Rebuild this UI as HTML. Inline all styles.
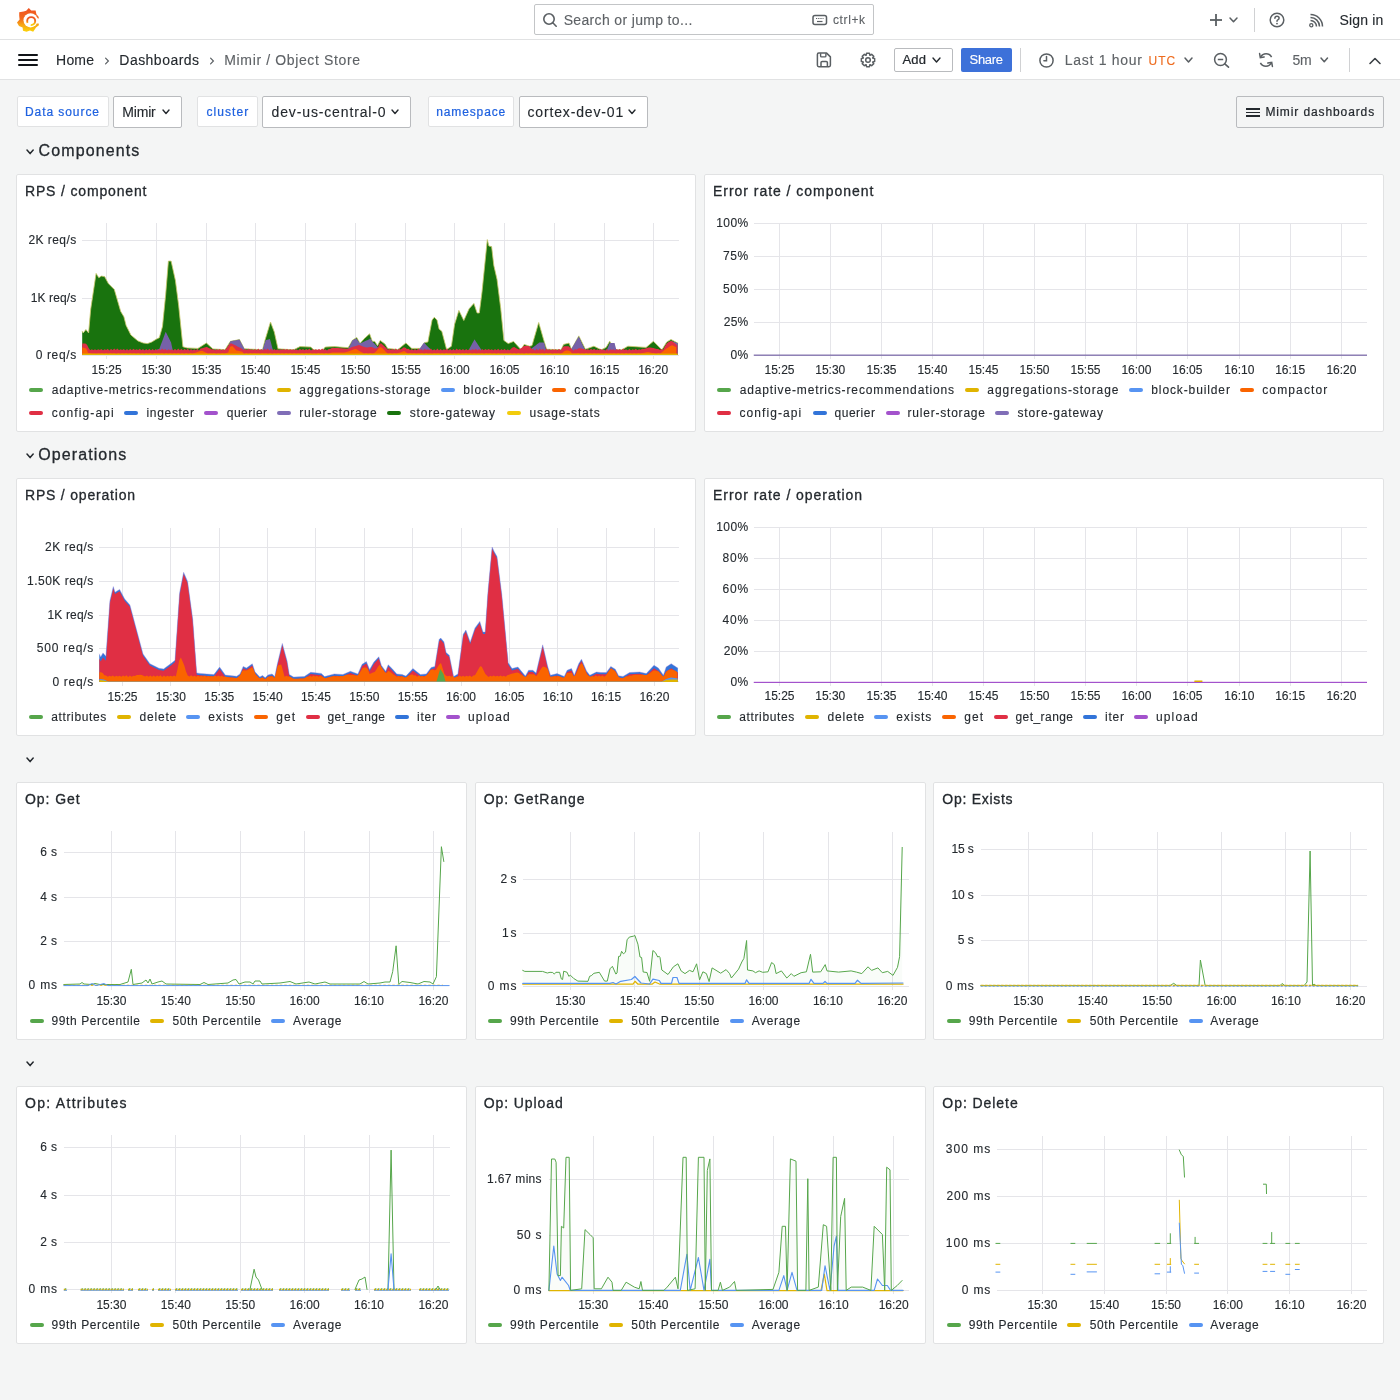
<!DOCTYPE html>
<html><head><meta charset="utf-8"><title>Mimir / Object Store - Dashboards - Grafana</title>
<style>
html,body{margin:0;padding:0;background:#f4f5f5;width:1400px;height:1400px;overflow:hidden;}
body{position:relative;font-family:"Liberation Sans",sans-serif;color:#24292e;}
.t{position:absolute;white-space:nowrap;-webkit-text-stroke:0.12px currentColor;}
#w{position:absolute;left:0;top:0;width:1400px;height:1400px;will-change:transform;}
</style></head><body><div id="w">
<div style="position:absolute;left:0px;top:0px;width:1400px;height:39px;background:#fff"></div>
<div style="position:absolute;left:0px;top:39px;width:1400px;height:1px;background:#e1e2e3"></div>
<div style="position:absolute;left:0px;top:40px;width:1400px;height:39px;background:#fff"></div>
<div style="position:absolute;left:0px;top:79px;width:1400px;height:1px;background:#e1e2e3"></div>
<svg style="position:absolute;left:14px;top:6px;" width="28" height="28" viewBox="0 0 28 28"><defs><linearGradient id="lg" x1="0" y1="0" x2="0" y2="1"><stop offset="0" stop-color="#ef5223"/><stop offset="0.45" stop-color="#f26b1d"/><stop offset="0.7" stop-color="#f7a415"/><stop offset="1" stop-color="#fbd40a"/></linearGradient></defs>
<path fill="url(#lg)" d="M14.8,2 L17.2,4.6 L21.6,4.4 L22.4,8.2 L24.4,10.5 L25.2,13 L24.6,16.5 L24.9,19.3 L22,21.5 L19.2,25.8 L16,24.4 L12.5,25.8 L9,24.8 L8.6,21.5 L5,20 L3,16.5 L5.6,13.5 L5.2,10 L5.2,6.2 L9.6,5.6 L12.2,4.8 Z"/>
<circle cx="16.6" cy="14.3" r="7.1" fill="#fff"/>
<path d="M22.6,12.2 L26,12.4 L26,17.4 L23,17.4 Z" fill="#fff"/>
<circle cx="17.2" cy="15.1" r="4.0" fill="none" stroke="url(#lg)" stroke-width="1.9" stroke-dasharray="6.63 3.84 14.66 0"/>
</svg>
<div style="position:absolute;left:534px;top:4px;width:340px;height:31px;box-sizing:border-box;border:1px solid #c3c5c7;border-radius:2px;background:#fff"></div>
<svg style="position:absolute;left:542px;top:12px;" width="16" height="16" viewBox="0 0 16 16"><circle cx="7" cy="7" r="5.2" fill="none" stroke="#5a5f63" stroke-width="1.6"/><line x1="10.8" y1="10.8" x2="14.2" y2="14.2" stroke="#5a5f63" stroke-width="1.6" stroke-linecap="round"/></svg>
<div class="t" style="left:563.70px;top:13px;font-size:14px;line-height:14px;color:#5e6266;letter-spacing:0.341px;">Search or jump to...</div>
<svg style="position:absolute;left:812px;top:14px;" width="16" height="12" viewBox="0 0 16 12"><rect x="1" y="1.5" width="13.5" height="9" rx="2" fill="none" stroke="#5a5f63" stroke-width="1.5"/><line x1="4" y1="4.5" x2="11.5" y2="4.5" stroke="#5a5f63" stroke-width="1" stroke-dasharray="1.2 1"/><line x1="5" y1="7.5" x2="10.5" y2="7.5" stroke="#5a5f63" stroke-width="1.2"/></svg>
<div class="t" style="left:832.90px;top:14px;font-size:12px;line-height:12px;color:#5e6266;letter-spacing:0.637px;">ctrl+k</div>
<svg style="position:absolute;left:1208px;top:12px;" width="16" height="16" viewBox="0 0 16 16"><line x1="8" y1="2" x2="8" y2="14" stroke="#5a5f63" stroke-width="1.8"/><line x1="2" y1="8" x2="14" y2="8" stroke="#5a5f63" stroke-width="1.8"/></svg>
<svg style="position:absolute;left:1227.5px;top:16.1px;" width="11" height="7.8" viewBox="0 0 11 7.8"><polyline points="2,2 5.5,5.8 9,2" fill="none" stroke="#5a5f63" stroke-width="1.5" stroke-linecap="round" stroke-linejoin="round"/></svg>
<div style="position:absolute;left:1254px;top:8px;width:1px;height:24px;background:#d0d1d3"></div>
<svg style="position:absolute;left:1268px;top:11px;" width="18" height="18" viewBox="0 0 18 18"><circle cx="9" cy="9" r="6.8" fill="none" stroke="#5a5f63" stroke-width="1.5"/><path d="M6.9 7.3 Q7 5.3 9 5.3 Q11.1 5.3 11.1 7.1 Q11.1 8.3 9.8 8.9 Q9 9.3 9 10.3" fill="none" stroke="#5a5f63" stroke-width="1.5" stroke-linecap="round"/><circle cx="9" cy="12.6" r="0.9" fill="#5a5f63"/></svg>
<svg style="position:absolute;left:1308px;top:13px;" width="16" height="16" viewBox="0 0 16 16"><circle cx="3.3" cy="12.2" r="1.6" fill="none" stroke="#5a5f63" stroke-width="1.3"/><path d="M2.5 7.5 A6 6 0 0 1 8.5 13.5" fill="none" stroke="#5a5f63" stroke-width="1.5"/><path d="M2.5 4.5 A9 9 0 0 1 11.5 13.5" fill="none" stroke="#5a5f63" stroke-width="1.5"/><path d="M2.5 1.5 A12 12 0 0 1 14.5 13.5" fill="none" stroke="#5a5f63" stroke-width="1.5"/></svg>
<div class="t" style="left:1339.60px;top:13px;font-size:14px;line-height:14px;letter-spacing:0.134px;">Sign in</div>
<div style="position:absolute;left:18px;top:54px;width:20px;height:2.2px;background:#111418;border-radius:1px"></div>
<div style="position:absolute;left:18px;top:59px;width:20px;height:2.2px;background:#111418;border-radius:1px"></div>
<div style="position:absolute;left:18px;top:64px;width:20px;height:2.2px;background:#111418;border-radius:1px"></div>
<div class="t" style="left:56.10px;top:53px;font-size:14px;line-height:14px;letter-spacing:0.191px;">Home</div>
<svg style="position:absolute;left:103px;top:56px;" width="8" height="10" viewBox="0 0 8 10"><polyline points="2.6,2.2 5.4,5 2.6,7.8" fill="none" stroke="#5a5f63" stroke-width="1.2" stroke-linecap="round"/></svg>
<div class="t" style="left:119.30px;top:53px;font-size:14px;line-height:14px;letter-spacing:0.472px;">Dashboards</div>
<svg style="position:absolute;left:208px;top:56px;" width="8" height="10" viewBox="0 0 8 10"><polyline points="2.6,2.2 5.4,5 2.6,7.8" fill="none" stroke="#5a5f63" stroke-width="1.2" stroke-linecap="round"/></svg>
<div class="t" style="left:224.30px;top:53px;font-size:14px;line-height:14px;color:#5e6266;letter-spacing:0.634px;">Mimir / Object Store</div>
<svg style="position:absolute;left:815px;top:51px;" width="18" height="18" viewBox="0 0 18 18"><path d="M3.8,2.1 H11.6 L15.4,5.9 V14.3 Q15.4,15.7 14,15.7 H3.8 Q2.4,15.7 2.4,14.3 V3.5 Q2.4,2.1 3.8,2.1 Z" fill="none" stroke="#5a5f63" stroke-width="1.5" stroke-linejoin="round"/><path d="M5.6,2.2 V4.9 Q5.6,5.9 6.6,5.9 H9.9 Q10.9,5.9 10.9,4.9 V2.2" fill="none" stroke="#5a5f63" stroke-width="1.4"/><path d="M6,15.6 V11.6 Q6,10.4 7.2,10.4 H11.2 Q12.4,10.4 12.4,11.6 V15.6" fill="none" stroke="#5a5f63" stroke-width="1.5"/></svg>
<svg style="position:absolute;left:859px;top:51px;" width="18" height="18" viewBox="0 0 18 18"><g transform="translate(9,9)"><path d="M6.64,-1.48 L6.64,1.48 L4.74,1.89 L4.69,2.01 L5.74,3.64 L3.64,5.74 L2.01,4.69 L1.89,4.74 L1.48,6.64 L-1.48,6.64 L-1.89,4.74 L-2.01,4.69 L-3.64,5.74 L-5.74,3.64 L-4.69,2.01 L-4.74,1.89 L-6.64,1.48 L-6.64,-1.48 L-4.74,-1.89 L-4.69,-2.01 L-5.74,-3.64 L-3.64,-5.74 L-2.01,-4.69 L-1.89,-4.74 L-1.48,-6.64 L1.48,-6.64 L1.89,-4.74 L2.01,-4.69 L3.64,-5.74 L5.74,-3.64 L4.69,-2.01 L4.74,-1.89 Z" fill="none" stroke="#5a5f63" stroke-width="1.5" stroke-linejoin="round"/><circle r="2.3" fill="none" stroke="#5a5f63" stroke-width="1.5"/></g></svg>
<div style="position:absolute;left:894px;top:48px;width:59px;height:24px;box-sizing:border-box;border:1px solid #b9bbbe;border-radius:2px;background:#fff"></div>
<div class="t" style="left:902.40px;top:53px;font-size:13px;line-height:13px;letter-spacing:0.280px;-webkit-text-stroke:0.22px currentColor;">Add</div>
<svg style="position:absolute;left:930.5px;top:55.7px;" width="11" height="8" viewBox="0 0 11 8"><polyline points="2,2 5.5,6 9,2" fill="none" stroke="#24292e" stroke-width="1.4" stroke-linecap="round" stroke-linejoin="round"/></svg>
<div style="position:absolute;left:961px;top:48px;width:51px;height:24px;background:#3d71d9;border-radius:2px"></div>
<div class="t" style="left:969.60px;top:53px;font-size:13px;line-height:13px;color:#ffffff;letter-spacing:-0.326px;">Share</div>
<div style="position:absolute;left:1020px;top:48px;width:1px;height:24px;background:#d0d1d3"></div>
<svg style="position:absolute;left:1038px;top:52px;" width="17" height="17" viewBox="0 0 17 17"><circle cx="8.5" cy="8.5" r="6.6" fill="none" stroke="#5a5f63" stroke-width="1.5"/><polyline points="8.5,4.6 8.5,8.8 5.9,8.8" fill="none" stroke="#5a5f63" stroke-width="1.5" stroke-linecap="round"/></svg>
<div class="t" style="left:1064.70px;top:53px;font-size:14px;line-height:14px;color:#5e6266;letter-spacing:0.718px;">Last 1 hour</div>
<div class="t" style="left:1148.40px;top:55px;font-size:12px;line-height:12px;color:#ee6b1e;letter-spacing:1.114px;">UTC</div>
<svg style="position:absolute;left:1182.5px;top:55.8px;" width="11" height="8" viewBox="0 0 11 8"><polyline points="2,2 5.5,6 9,2" fill="none" stroke="#5a5f63" stroke-width="1.5" stroke-linecap="round" stroke-linejoin="round"/></svg>
<svg style="position:absolute;left:1213px;top:52px;" width="18" height="18" viewBox="0 0 18 18"><circle cx="7.5" cy="7.5" r="5.9" fill="none" stroke="#5a5f63" stroke-width="1.5"/><line x1="4.8" y1="7.5" x2="10.2" y2="7.5" stroke="#5a5f63" stroke-width="1.5"/><line x1="11.8" y1="11.8" x2="15.5" y2="15.2" stroke="#5a5f63" stroke-width="1.6" stroke-linecap="round"/></svg>
<svg style="position:absolute;left:1257px;top:51px;" width="18" height="18" viewBox="0 0 18 18"><path d="M3.6 6.2 A6.2 6.2 0 0 1 14.6 6.2" fill="none" stroke="#5a5f63" stroke-width="1.5"/><path d="M14.4 11.8 A6.2 6.2 0 0 1 3.4 11.8" fill="none" stroke="#5a5f63" stroke-width="1.5"/><polyline points="2.6,2.6 3.3,6.6 7.2,5.9" fill="none" stroke="#5a5f63" stroke-width="1.5" stroke-linecap="round"/><polyline points="15.4,15.4 14.7,11.4 10.8,12.1" fill="none" stroke="#5a5f63" stroke-width="1.5" stroke-linecap="round"/></svg>
<div class="t" style="left:1292.60px;top:53px;font-size:14px;line-height:14px;color:#5e6266;letter-spacing:-0.337px;">5m</div>
<svg style="position:absolute;left:1319.05px;top:56.2px;" width="10.5" height="7.8" viewBox="0 0 10.5 7.8"><polyline points="2,2 5.25,5.8 8.5,2" fill="none" stroke="#5a5f63" stroke-width="1.5" stroke-linecap="round" stroke-linejoin="round"/></svg>
<div style="position:absolute;left:1349px;top:48px;width:1px;height:24px;background:#d0d1d3"></div>
<svg style="position:absolute;left:1368px;top:56px;" width="14" height="10" viewBox="0 0 14 10"><polyline points="2,7.5 7,2.5 12,7.5" fill="none" stroke="#3b4045" stroke-width="1.6" stroke-linecap="round" stroke-linejoin="round"/></svg>
<div style="position:absolute;left:16.5px;top:96px;width:92.0px;height:31px;box-sizing:border-box;border:1px solid #e1e2e3;border-radius:2px;background:#fff"></div>
<div class="t" style="left:25.00px;top:106px;font-size:12px;line-height:12px;color:#1f62e0;letter-spacing:0.931px;-webkit-text-stroke:0.22px currentColor;">Data source</div>
<div style="position:absolute;left:113px;top:96px;width:68.5px;height:32px;box-sizing:border-box;border:1px solid #b9bbbe;border-radius:2px;background:#fff"></div>
<div class="t" style="left:122.30px;top:105px;font-size:14px;line-height:14px;letter-spacing:-0.197px;">Mimir</div>
<svg style="position:absolute;left:160.5px;top:107.95px;" width="10" height="7.5" viewBox="0 0 10 7.5"><polyline points="2,2 5.0,5.5 8,2" fill="none" stroke="#24292e" stroke-width="1.4" stroke-linecap="round" stroke-linejoin="round"/></svg>
<div style="position:absolute;left:197px;top:96px;width:61px;height:31px;box-sizing:border-box;border:1px solid #e1e2e3;border-radius:2px;background:#fff"></div>
<div class="t" style="left:206.40px;top:106px;font-size:12px;line-height:12px;color:#1f62e0;letter-spacing:1.093px;-webkit-text-stroke:0.22px currentColor;">cluster</div>
<div style="position:absolute;left:262px;top:96px;width:149px;height:32px;box-sizing:border-box;border:1px solid #b9bbbe;border-radius:2px;background:#fff"></div>
<div class="t" style="left:271.60px;top:105px;font-size:14px;line-height:14px;letter-spacing:0.854px;">dev-us-central-0</div>
<svg style="position:absolute;left:390.0px;top:107.95px;" width="10" height="7.5" viewBox="0 0 10 7.5"><polyline points="2,2 5.0,5.5 8,2" fill="none" stroke="#24292e" stroke-width="1.4" stroke-linecap="round" stroke-linejoin="round"/></svg>
<div style="position:absolute;left:427.5px;top:96px;width:86.5px;height:31px;box-sizing:border-box;border:1px solid #e1e2e3;border-radius:2px;background:#fff"></div>
<div class="t" style="left:436.30px;top:106px;font-size:12px;line-height:12px;color:#1f62e0;letter-spacing:0.859px;-webkit-text-stroke:0.22px currentColor;">namespace</div>
<div style="position:absolute;left:518.5px;top:96px;width:129.5px;height:32px;box-sizing:border-box;border:1px solid #b9bbbe;border-radius:2px;background:#fff"></div>
<div class="t" style="left:527.50px;top:105px;font-size:14px;line-height:14px;letter-spacing:0.846px;">cortex-dev-01</div>
<svg style="position:absolute;left:627.2px;top:107.95px;" width="10" height="7.5" viewBox="0 0 10 7.5"><polyline points="2,2 5.0,5.5 8,2" fill="none" stroke="#24292e" stroke-width="1.4" stroke-linecap="round" stroke-linejoin="round"/></svg>
<div style="position:absolute;left:1236px;top:96px;width:148px;height:32px;box-sizing:border-box;border:1px solid #b9bbbe;border-radius:2px;"></div>
<div style="position:absolute;left:1246px;top:108px;width:14px;height:1.6px;background:#24292e"></div>
<div style="position:absolute;left:1246px;top:111.5px;width:14px;height:1.6px;background:#24292e"></div>
<div style="position:absolute;left:1246px;top:115px;width:14px;height:1.6px;background:#24292e"></div>
<div class="t" style="left:1265.40px;top:106px;font-size:12px;line-height:12px;letter-spacing:0.895px;-webkit-text-stroke:0.22px currentColor;">Mimir dashboards</div>
<svg style="position:absolute;left:25.0px;top:148.2px;" width="10.2" height="7.6" viewBox="0 0 10.2 7.6"><polyline points="2,2 5.1,5.6 8.2,2" fill="none" stroke="#24292e" stroke-width="1.5" stroke-linecap="round" stroke-linejoin="round"/></svg>
<div class="t" style="left:38.60px;top:143px;font-size:16px;line-height:16px;letter-spacing:1.102px;-webkit-text-stroke:0.3px currentColor;">Components</div>
<svg style="position:absolute;left:25.0px;top:452.2px;" width="10.2" height="7.6" viewBox="0 0 10.2 7.6"><polyline points="2,2 5.1,5.6 8.2,2" fill="none" stroke="#24292e" stroke-width="1.5" stroke-linecap="round" stroke-linejoin="round"/></svg>
<div class="t" style="left:38.30px;top:447px;font-size:16px;line-height:16px;letter-spacing:1.075px;-webkit-text-stroke:0.3px currentColor;">Operations</div>
<svg style="position:absolute;left:25.0px;top:756.0px;" width="10.2" height="7.6" viewBox="0 0 10.2 7.6"><polyline points="2,2 5.1,5.6 8.2,2" fill="none" stroke="#24292e" stroke-width="1.5" stroke-linecap="round" stroke-linejoin="round"/></svg>
<svg style="position:absolute;left:25.0px;top:1059.8px;" width="10.2" height="7.6" viewBox="0 0 10.2 7.6"><polyline points="2,2 5.1,5.6 8.2,2" fill="none" stroke="#24292e" stroke-width="1.5" stroke-linecap="round" stroke-linejoin="round"/></svg>
<div style="position:absolute;left:16px;top:174px;width:680px;height:258px;box-sizing:border-box;border:1px solid #e1e2e3;border-radius:2px;background:#fff"></div>
<div class="t" style="left:25.00px;top:184px;font-size:14px;line-height:14px;letter-spacing:0.835px;-webkit-text-stroke:0.3px currentColor;">RPS / component</div>
<div class="t" style="left:28.50px;top:234px;font-size:12px;line-height:12px;letter-spacing:0.433px;">2K req/s</div>
<div class="t" style="left:30.80px;top:292px;font-size:12px;line-height:12px;letter-spacing:0.104px;">1K req/s</div>
<div class="t" style="left:35.70px;top:349px;font-size:12px;line-height:12px;letter-spacing:0.638px;">0 req/s</div>
<div class="t" style="left:91.59px;top:364px;font-size:12px;line-height:12px;">15:25</div>
<div class="t" style="left:141.39px;top:364px;font-size:12px;line-height:12px;">15:30</div>
<div class="t" style="left:191.39px;top:364px;font-size:12px;line-height:12px;">15:35</div>
<div class="t" style="left:240.49px;top:364px;font-size:12px;line-height:12px;">15:40</div>
<div class="t" style="left:290.39px;top:364px;font-size:12px;line-height:12px;">15:45</div>
<div class="t" style="left:340.49px;top:364px;font-size:12px;line-height:12px;">15:50</div>
<div class="t" style="left:390.89px;top:364px;font-size:12px;line-height:12px;">15:55</div>
<div class="t" style="left:439.59px;top:364px;font-size:12px;line-height:12px;">16:00</div>
<div class="t" style="left:489.49px;top:364px;font-size:12px;line-height:12px;">16:05</div>
<div class="t" style="left:539.49px;top:364px;font-size:12px;line-height:12px;">16:10</div>
<div class="t" style="left:589.39px;top:364px;font-size:12px;line-height:12px;">16:15</div>
<div class="t" style="left:638.19px;top:364px;font-size:12px;line-height:12px;">16:20</div>
<div style="position:absolute;left:29px;top:387.6px;width:14px;height:4px;background:#56a64b;border-radius:2px"></div>
<div class="t" style="left:51.70px;top:384px;font-size:12px;line-height:12px;letter-spacing:0.868px;">adaptive-metrics-recommendations</div>
<div style="position:absolute;left:277.1px;top:387.6px;width:14px;height:4px;background:#e0b400;border-radius:2px"></div>
<div class="t" style="left:299.30px;top:384px;font-size:12px;line-height:12px;letter-spacing:0.937px;">aggregations-storage</div>
<div style="position:absolute;left:441.2px;top:387.6px;width:14px;height:4px;background:#5794f2;border-radius:2px"></div>
<div class="t" style="left:463.30px;top:384px;font-size:12px;line-height:12px;letter-spacing:0.879px;">block-builder</div>
<div style="position:absolute;left:551.8px;top:387.6px;width:14px;height:4px;background:#fa6400;border-radius:2px"></div>
<div class="t" style="left:574.20px;top:384px;font-size:12px;line-height:12px;letter-spacing:1.136px;">compactor</div>
<div style="position:absolute;left:29px;top:410.9px;width:14px;height:4px;background:#e02f44;border-radius:2px"></div>
<div class="t" style="left:51.70px;top:407px;font-size:12px;line-height:12px;letter-spacing:1.097px;">config-api</div>
<div style="position:absolute;left:124.4px;top:410.9px;width:14px;height:4px;background:#3274d9;border-radius:2px"></div>
<div class="t" style="left:146.40px;top:407px;font-size:12px;line-height:12px;letter-spacing:0.702px;">ingester</div>
<div style="position:absolute;left:204.3px;top:410.9px;width:14px;height:4px;background:#a352cc;border-radius:2px"></div>
<div class="t" style="left:226.80px;top:407px;font-size:12px;line-height:12px;letter-spacing:0.490px;">querier</div>
<div style="position:absolute;left:277.1px;top:410.9px;width:14px;height:4px;background:#806eb7;border-radius:2px"></div>
<div class="t" style="left:299.30px;top:407px;font-size:12px;line-height:12px;letter-spacing:0.781px;">ruler-storage</div>
<div style="position:absolute;left:387.1px;top:410.9px;width:14px;height:4px;background:#19730e;border-radius:2px"></div>
<div class="t" style="left:409.80px;top:407px;font-size:12px;line-height:12px;letter-spacing:0.828px;">store-gateway</div>
<div style="position:absolute;left:507.2px;top:410.9px;width:14px;height:4px;background:#f2cc0c;border-radius:2px"></div>
<div class="t" style="left:529.40px;top:407px;font-size:12px;line-height:12px;letter-spacing:0.828px;">usage-stats</div>
<div style="position:absolute;left:704px;top:174px;width:680px;height:258px;box-sizing:border-box;border:1px solid #e1e2e3;border-radius:2px;background:#fff"></div>
<div class="t" style="left:713.00px;top:184px;font-size:14px;line-height:14px;letter-spacing:0.964px;-webkit-text-stroke:0.3px currentColor;">Error rate / component</div>
<div class="t" style="left:716.25px;top:217px;font-size:12px;line-height:12px;letter-spacing:0.438px;">100%</div>
<div class="t" style="left:723.00px;top:250px;font-size:12px;line-height:12px;letter-spacing:0.617px;">75%</div>
<div class="t" style="left:723.00px;top:283px;font-size:12px;line-height:12px;letter-spacing:0.617px;">50%</div>
<div class="t" style="left:723.75px;top:316px;font-size:12px;line-height:12px;letter-spacing:0.242px;">25%</div>
<div class="t" style="left:730.50px;top:349px;font-size:12px;line-height:12px;letter-spacing:0.406px;">0%</div>
<div class="t" style="left:764.49px;top:364px;font-size:12px;line-height:12px;">15:25</div>
<div class="t" style="left:815.24px;top:364px;font-size:12px;line-height:12px;">15:30</div>
<div class="t" style="left:866.49px;top:364px;font-size:12px;line-height:12px;">15:35</div>
<div class="t" style="left:917.49px;top:364px;font-size:12px;line-height:12px;">15:40</div>
<div class="t" style="left:968.49px;top:364px;font-size:12px;line-height:12px;">15:45</div>
<div class="t" style="left:1019.49px;top:364px;font-size:12px;line-height:12px;">15:50</div>
<div class="t" style="left:1070.49px;top:364px;font-size:12px;line-height:12px;">15:55</div>
<div class="t" style="left:1121.39px;top:364px;font-size:12px;line-height:12px;">16:00</div>
<div class="t" style="left:1172.29px;top:364px;font-size:12px;line-height:12px;">16:05</div>
<div class="t" style="left:1224.29px;top:364px;font-size:12px;line-height:12px;">16:10</div>
<div class="t" style="left:1275.19px;top:364px;font-size:12px;line-height:12px;">16:15</div>
<div class="t" style="left:1326.39px;top:364px;font-size:12px;line-height:12px;">16:20</div>
<div style="position:absolute;left:717px;top:387.6px;width:14px;height:4px;background:#56a64b;border-radius:2px"></div>
<div class="t" style="left:739.70px;top:384px;font-size:12px;line-height:12px;letter-spacing:0.868px;">adaptive-metrics-recommendations</div>
<div style="position:absolute;left:965.1px;top:387.6px;width:14px;height:4px;background:#e0b400;border-radius:2px"></div>
<div class="t" style="left:987.30px;top:384px;font-size:12px;line-height:12px;letter-spacing:0.937px;">aggregations-storage</div>
<div style="position:absolute;left:1129.2px;top:387.6px;width:14px;height:4px;background:#5794f2;border-radius:2px"></div>
<div class="t" style="left:1151.30px;top:384px;font-size:12px;line-height:12px;letter-spacing:0.879px;">block-builder</div>
<div style="position:absolute;left:1239.8px;top:387.6px;width:14px;height:4px;background:#fa6400;border-radius:2px"></div>
<div class="t" style="left:1262.20px;top:384px;font-size:12px;line-height:12px;letter-spacing:1.136px;">compactor</div>
<div style="position:absolute;left:717px;top:410.9px;width:14px;height:4px;background:#e02f44;border-radius:2px"></div>
<div class="t" style="left:739.50px;top:407px;font-size:12px;line-height:12px;letter-spacing:1.080px;">config-api</div>
<div style="position:absolute;left:812.5px;top:410.9px;width:14px;height:4px;background:#3274d9;border-radius:2px"></div>
<div class="t" style="left:834.50px;top:407px;font-size:12px;line-height:12px;letter-spacing:0.523px;">querier</div>
<div style="position:absolute;left:885.5px;top:410.9px;width:14px;height:4px;background:#a352cc;border-radius:2px"></div>
<div class="t" style="left:907.50px;top:407px;font-size:12px;line-height:12px;letter-spacing:0.789px;">ruler-storage</div>
<div style="position:absolute;left:995px;top:410.9px;width:14px;height:4px;background:#806eb7;border-radius:2px"></div>
<div class="t" style="left:1017.50px;top:407px;font-size:12px;line-height:12px;letter-spacing:0.845px;">store-gateway</div>
<div style="position:absolute;left:16px;top:478px;width:680px;height:258px;box-sizing:border-box;border:1px solid #e1e2e3;border-radius:2px;background:#fff"></div>
<div class="t" style="left:25.00px;top:488px;font-size:14px;line-height:14px;letter-spacing:0.799px;-webkit-text-stroke:0.3px currentColor;">RPS / operation</div>
<div class="t" style="left:45.00px;top:541px;font-size:12px;line-height:12px;letter-spacing:0.511px;">2K req/s</div>
<div class="t" style="left:27.00px;top:575px;font-size:12px;line-height:12px;letter-spacing:0.491px;">1.50K req/s</div>
<div class="t" style="left:47.50px;top:609px;font-size:12px;line-height:12px;letter-spacing:0.154px;">1K req/s</div>
<div class="t" style="left:36.75px;top:642px;font-size:12px;line-height:12px;letter-spacing:0.811px;">500 req/s</div>
<div class="t" style="left:52.50px;top:676px;font-size:12px;line-height:12px;letter-spacing:0.680px;">0 req/s</div>
<div class="t" style="left:107.49px;top:691px;font-size:12px;line-height:12px;">15:25</div>
<div class="t" style="left:155.85px;top:691px;font-size:12px;line-height:12px;">15:30</div>
<div class="t" style="left:204.21px;top:691px;font-size:12px;line-height:12px;">15:35</div>
<div class="t" style="left:252.57px;top:691px;font-size:12px;line-height:12px;">15:40</div>
<div class="t" style="left:300.93px;top:691px;font-size:12px;line-height:12px;">15:45</div>
<div class="t" style="left:349.29px;top:691px;font-size:12px;line-height:12px;">15:50</div>
<div class="t" style="left:397.65px;top:691px;font-size:12px;line-height:12px;">15:55</div>
<div class="t" style="left:446.01px;top:691px;font-size:12px;line-height:12px;">16:00</div>
<div class="t" style="left:494.37px;top:691px;font-size:12px;line-height:12px;">16:05</div>
<div class="t" style="left:542.73px;top:691px;font-size:12px;line-height:12px;">16:10</div>
<div class="t" style="left:591.09px;top:691px;font-size:12px;line-height:12px;">16:15</div>
<div class="t" style="left:639.45px;top:691px;font-size:12px;line-height:12px;">16:20</div>
<div style="position:absolute;left:29.25px;top:714.9px;width:14px;height:4px;background:#56a64b;border-radius:2px"></div>
<div class="t" style="left:51.25px;top:711px;font-size:12px;line-height:12px;letter-spacing:0.628px;">attributes</div>
<div style="position:absolute;left:117px;top:714.9px;width:14px;height:4px;background:#e0b400;border-radius:2px"></div>
<div class="t" style="left:139.50px;top:711px;font-size:12px;line-height:12px;letter-spacing:0.812px;">delete</div>
<div style="position:absolute;left:186.25px;top:714.9px;width:14px;height:4px;background:#5794f2;border-radius:2px"></div>
<div class="t" style="left:208.25px;top:711px;font-size:12px;line-height:12px;letter-spacing:0.866px;">exists</div>
<div style="position:absolute;left:253.75px;top:714.9px;width:14px;height:4px;background:#fa6400;border-radius:2px"></div>
<div class="t" style="left:276.25px;top:711px;font-size:12px;line-height:12px;letter-spacing:1.039px;">get</div>
<div style="position:absolute;left:305.5px;top:714.9px;width:14px;height:4px;background:#e02f44;border-radius:2px"></div>
<div class="t" style="left:327.50px;top:711px;font-size:12px;line-height:12px;letter-spacing:0.434px;">get_range</div>
<div style="position:absolute;left:395.3px;top:714.9px;width:14px;height:4px;background:#3274d9;border-radius:2px"></div>
<div class="t" style="left:417.10px;top:711px;font-size:12px;line-height:12px;letter-spacing:0.709px;">iter</div>
<div style="position:absolute;left:446.2px;top:714.9px;width:14px;height:4px;background:#a352cc;border-radius:2px"></div>
<div class="t" style="left:468.00px;top:711px;font-size:12px;line-height:12px;letter-spacing:1.134px;">upload</div>
<div style="position:absolute;left:704px;top:478px;width:680px;height:258px;box-sizing:border-box;border:1px solid #e1e2e3;border-radius:2px;background:#fff"></div>
<div class="t" style="left:713.00px;top:488px;font-size:14px;line-height:14px;letter-spacing:0.947px;-webkit-text-stroke:0.3px currentColor;">Error rate / operation</div>
<div class="t" style="left:716.25px;top:521px;font-size:12px;line-height:12px;letter-spacing:0.438px;">100%</div>
<div class="t" style="left:722.50px;top:552px;font-size:12px;line-height:12px;letter-spacing:0.867px;">80%</div>
<div class="t" style="left:722.50px;top:583px;font-size:12px;line-height:12px;letter-spacing:0.867px;">60%</div>
<div class="t" style="left:722.50px;top:614px;font-size:12px;line-height:12px;letter-spacing:0.867px;">40%</div>
<div class="t" style="left:723.75px;top:645px;font-size:12px;line-height:12px;letter-spacing:0.242px;">20%</div>
<div class="t" style="left:730.50px;top:676px;font-size:12px;line-height:12px;letter-spacing:0.406px;">0%</div>
<div class="t" style="left:764.49px;top:690px;font-size:12px;line-height:12px;">15:25</div>
<div class="t" style="left:815.24px;top:690px;font-size:12px;line-height:12px;">15:30</div>
<div class="t" style="left:866.49px;top:690px;font-size:12px;line-height:12px;">15:35</div>
<div class="t" style="left:917.49px;top:690px;font-size:12px;line-height:12px;">15:40</div>
<div class="t" style="left:968.49px;top:690px;font-size:12px;line-height:12px;">15:45</div>
<div class="t" style="left:1019.49px;top:690px;font-size:12px;line-height:12px;">15:50</div>
<div class="t" style="left:1070.49px;top:690px;font-size:12px;line-height:12px;">15:55</div>
<div class="t" style="left:1121.39px;top:690px;font-size:12px;line-height:12px;">16:00</div>
<div class="t" style="left:1172.29px;top:690px;font-size:12px;line-height:12px;">16:05</div>
<div class="t" style="left:1224.29px;top:690px;font-size:12px;line-height:12px;">16:10</div>
<div class="t" style="left:1275.19px;top:690px;font-size:12px;line-height:12px;">16:15</div>
<div class="t" style="left:1326.39px;top:690px;font-size:12px;line-height:12px;">16:20</div>
<div style="position:absolute;left:717.25px;top:714.9px;width:14px;height:4px;background:#56a64b;border-radius:2px"></div>
<div class="t" style="left:739.25px;top:711px;font-size:12px;line-height:12px;letter-spacing:0.628px;">attributes</div>
<div style="position:absolute;left:805px;top:714.9px;width:14px;height:4px;background:#e0b400;border-radius:2px"></div>
<div class="t" style="left:827.50px;top:711px;font-size:12px;line-height:12px;letter-spacing:0.812px;">delete</div>
<div style="position:absolute;left:874.25px;top:714.9px;width:14px;height:4px;background:#5794f2;border-radius:2px"></div>
<div class="t" style="left:896.25px;top:711px;font-size:12px;line-height:12px;letter-spacing:0.866px;">exists</div>
<div style="position:absolute;left:941.75px;top:714.9px;width:14px;height:4px;background:#fa6400;border-radius:2px"></div>
<div class="t" style="left:964.25px;top:711px;font-size:12px;line-height:12px;letter-spacing:1.039px;">get</div>
<div style="position:absolute;left:993.5px;top:714.9px;width:14px;height:4px;background:#e02f44;border-radius:2px"></div>
<div class="t" style="left:1015.50px;top:711px;font-size:12px;line-height:12px;letter-spacing:0.434px;">get_range</div>
<div style="position:absolute;left:1083.3px;top:714.9px;width:14px;height:4px;background:#3274d9;border-radius:2px"></div>
<div class="t" style="left:1105.10px;top:711px;font-size:12px;line-height:12px;letter-spacing:0.709px;">iter</div>
<div style="position:absolute;left:1134.2px;top:714.9px;width:14px;height:4px;background:#a352cc;border-radius:2px"></div>
<div class="t" style="left:1156.00px;top:711px;font-size:12px;line-height:12px;letter-spacing:1.134px;">upload</div>
<div style="position:absolute;left:16px;top:782px;width:451px;height:258px;box-sizing:border-box;border:1px solid #e1e2e3;border-radius:2px;background:#fff"></div>
<div class="t" style="left:25.00px;top:792px;font-size:14px;line-height:14px;letter-spacing:0.931px;-webkit-text-stroke:0.3px currentColor;">Op: Get</div>
<div class="t" style="left:40.30px;top:846px;font-size:12px;line-height:12px;letter-spacing:0.350px;">6 s</div>
<div class="t" style="left:40.30px;top:891px;font-size:12px;line-height:12px;letter-spacing:0.350px;">4 s</div>
<div class="t" style="left:40.30px;top:935px;font-size:12px;line-height:12px;letter-spacing:0.350px;">2 s</div>
<div class="t" style="left:28.50px;top:979px;font-size:12px;line-height:12px;letter-spacing:0.833px;">0 ms</div>
<div class="t" style="left:96.39px;top:995px;font-size:12px;line-height:12px;">15:30</div>
<div class="t" style="left:160.79px;top:995px;font-size:12px;line-height:12px;">15:40</div>
<div class="t" style="left:225.19px;top:995px;font-size:12px;line-height:12px;">15:50</div>
<div class="t" style="left:289.59px;top:995px;font-size:12px;line-height:12px;">16:00</div>
<div class="t" style="left:353.99px;top:995px;font-size:12px;line-height:12px;">16:10</div>
<div class="t" style="left:418.39px;top:995px;font-size:12px;line-height:12px;">16:20</div>
<div style="position:absolute;left:29.5px;top:1018.6px;width:14px;height:4px;background:#56a64b;border-radius:2px"></div>
<div class="t" style="left:51.40px;top:1015px;font-size:12px;line-height:12px;letter-spacing:0.612px;">99th Percentile</div>
<div style="position:absolute;left:150px;top:1018.6px;width:14px;height:4px;background:#e0b400;border-radius:2px"></div>
<div class="t" style="left:172.50px;top:1015px;font-size:12px;line-height:12px;letter-spacing:0.591px;">50th Percentile</div>
<div style="position:absolute;left:271.2px;top:1018.6px;width:14px;height:4px;background:#5794f2;border-radius:2px"></div>
<div class="t" style="left:293.00px;top:1015px;font-size:12px;line-height:12px;letter-spacing:0.655px;">Average</div>
<div style="position:absolute;left:474.67px;top:782px;width:451px;height:258px;box-sizing:border-box;border:1px solid #e1e2e3;border-radius:2px;background:#fff"></div>
<div class="t" style="left:483.67px;top:792px;font-size:14px;line-height:14px;letter-spacing:0.953px;-webkit-text-stroke:0.3px currentColor;">Op: GetRange</div>
<div class="t" style="left:500.60px;top:873px;font-size:12px;line-height:12px;letter-spacing:-0.100px;">2 s</div>
<div class="t" style="left:501.90px;top:927px;font-size:12px;line-height:12px;letter-spacing:-0.750px;">1 s</div>
<div class="t" style="left:487.70px;top:980px;font-size:12px;line-height:12px;letter-spacing:0.900px;">0 ms</div>
<div class="t" style="left:555.29px;top:995px;font-size:12px;line-height:12px;">15:30</div>
<div class="t" style="left:619.69px;top:995px;font-size:12px;line-height:12px;">15:40</div>
<div class="t" style="left:684.09px;top:995px;font-size:12px;line-height:12px;">15:50</div>
<div class="t" style="left:748.49px;top:995px;font-size:12px;line-height:12px;">16:00</div>
<div class="t" style="left:812.89px;top:995px;font-size:12px;line-height:12px;">16:10</div>
<div class="t" style="left:877.29px;top:995px;font-size:12px;line-height:12px;">16:20</div>
<div style="position:absolute;left:488.17px;top:1018.6px;width:14px;height:4px;background:#56a64b;border-radius:2px"></div>
<div class="t" style="left:510.07px;top:1015px;font-size:12px;line-height:12px;letter-spacing:0.612px;">99th Percentile</div>
<div style="position:absolute;left:608.6700000000001px;top:1018.6px;width:14px;height:4px;background:#e0b400;border-radius:2px"></div>
<div class="t" style="left:631.17px;top:1015px;font-size:12px;line-height:12px;letter-spacing:0.591px;">50th Percentile</div>
<div style="position:absolute;left:729.87px;top:1018.6px;width:14px;height:4px;background:#5794f2;border-radius:2px"></div>
<div class="t" style="left:751.67px;top:1015px;font-size:12px;line-height:12px;letter-spacing:0.655px;">Average</div>
<div style="position:absolute;left:933.33px;top:782px;width:451px;height:258px;box-sizing:border-box;border:1px solid #e1e2e3;border-radius:2px;background:#fff"></div>
<div class="t" style="left:942.33px;top:792px;font-size:14px;line-height:14px;letter-spacing:0.719px;-webkit-text-stroke:0.3px currentColor;">Op: Exists</div>
<div class="t" style="left:951.50px;top:843px;font-size:12px;line-height:12px;letter-spacing:-0.124px;">15 s</div>
<div class="t" style="left:951.50px;top:889px;font-size:12px;line-height:12px;letter-spacing:-0.124px;">10 s</div>
<div class="t" style="left:957.70px;top:934px;font-size:12px;line-height:12px;letter-spacing:0.050px;">5 s</div>
<div class="t" style="left:945.70px;top:980px;font-size:12px;line-height:12px;letter-spacing:0.700px;">0 ms</div>
<div class="t" style="left:1013.29px;top:995px;font-size:12px;line-height:12px;">15:30</div>
<div class="t" style="left:1077.69px;top:995px;font-size:12px;line-height:12px;">15:40</div>
<div class="t" style="left:1142.09px;top:995px;font-size:12px;line-height:12px;">15:50</div>
<div class="t" style="left:1206.49px;top:995px;font-size:12px;line-height:12px;">16:00</div>
<div class="t" style="left:1270.89px;top:995px;font-size:12px;line-height:12px;">16:10</div>
<div class="t" style="left:1335.29px;top:995px;font-size:12px;line-height:12px;">16:20</div>
<div style="position:absolute;left:946.83px;top:1018.6px;width:14px;height:4px;background:#56a64b;border-radius:2px"></div>
<div class="t" style="left:968.73px;top:1015px;font-size:12px;line-height:12px;letter-spacing:0.612px;">99th Percentile</div>
<div style="position:absolute;left:1067.33px;top:1018.6px;width:14px;height:4px;background:#e0b400;border-radius:2px"></div>
<div class="t" style="left:1089.83px;top:1015px;font-size:12px;line-height:12px;letter-spacing:0.591px;">50th Percentile</div>
<div style="position:absolute;left:1188.53px;top:1018.6px;width:14px;height:4px;background:#5794f2;border-radius:2px"></div>
<div class="t" style="left:1210.33px;top:1015px;font-size:12px;line-height:12px;letter-spacing:0.655px;">Average</div>
<div style="position:absolute;left:16px;top:1086px;width:451px;height:258px;box-sizing:border-box;border:1px solid #e1e2e3;border-radius:2px;background:#fff"></div>
<div class="t" style="left:25.00px;top:1096px;font-size:14px;line-height:14px;letter-spacing:1.291px;-webkit-text-stroke:0.3px currentColor;">Op: Attributes</div>
<div class="t" style="left:40.30px;top:1141px;font-size:12px;line-height:12px;letter-spacing:0.350px;">6 s</div>
<div class="t" style="left:40.30px;top:1189px;font-size:12px;line-height:12px;letter-spacing:0.350px;">4 s</div>
<div class="t" style="left:40.30px;top:1236px;font-size:12px;line-height:12px;letter-spacing:0.350px;">2 s</div>
<div class="t" style="left:28.50px;top:1283px;font-size:12px;line-height:12px;letter-spacing:0.833px;">0 ms</div>
<div class="t" style="left:96.39px;top:1299px;font-size:12px;line-height:12px;">15:30</div>
<div class="t" style="left:160.79px;top:1299px;font-size:12px;line-height:12px;">15:40</div>
<div class="t" style="left:225.19px;top:1299px;font-size:12px;line-height:12px;">15:50</div>
<div class="t" style="left:289.59px;top:1299px;font-size:12px;line-height:12px;">16:00</div>
<div class="t" style="left:353.99px;top:1299px;font-size:12px;line-height:12px;">16:10</div>
<div class="t" style="left:418.39px;top:1299px;font-size:12px;line-height:12px;">16:20</div>
<div style="position:absolute;left:29.5px;top:1322.6px;width:14px;height:4px;background:#56a64b;border-radius:2px"></div>
<div class="t" style="left:51.40px;top:1319px;font-size:12px;line-height:12px;letter-spacing:0.612px;">99th Percentile</div>
<div style="position:absolute;left:150px;top:1322.6px;width:14px;height:4px;background:#e0b400;border-radius:2px"></div>
<div class="t" style="left:172.50px;top:1319px;font-size:12px;line-height:12px;letter-spacing:0.591px;">50th Percentile</div>
<div style="position:absolute;left:271.2px;top:1322.6px;width:14px;height:4px;background:#5794f2;border-radius:2px"></div>
<div class="t" style="left:293.00px;top:1319px;font-size:12px;line-height:12px;letter-spacing:0.655px;">Average</div>
<div style="position:absolute;left:474.67px;top:1086px;width:451px;height:258px;box-sizing:border-box;border:1px solid #e1e2e3;border-radius:2px;background:#fff"></div>
<div class="t" style="left:483.67px;top:1096px;font-size:14px;line-height:14px;letter-spacing:0.915px;-webkit-text-stroke:0.3px currentColor;">Op: Upload</div>
<div class="t" style="left:487.10px;top:1173px;font-size:12px;line-height:12px;letter-spacing:0.311px;">1.67 mins</div>
<div class="t" style="left:516.70px;top:1229px;font-size:12px;line-height:12px;letter-spacing:0.743px;">50 s</div>
<div class="t" style="left:513.40px;top:1284px;font-size:12px;line-height:12px;letter-spacing:0.733px;">0 ms</div>
<div class="t" style="left:578.19px;top:1299px;font-size:12px;line-height:12px;">15:30</div>
<div class="t" style="left:638.29px;top:1299px;font-size:12px;line-height:12px;">15:40</div>
<div class="t" style="left:698.39px;top:1299px;font-size:12px;line-height:12px;">15:50</div>
<div class="t" style="left:758.49px;top:1299px;font-size:12px;line-height:12px;">16:00</div>
<div class="t" style="left:818.59px;top:1299px;font-size:12px;line-height:12px;">16:10</div>
<div class="t" style="left:878.69px;top:1299px;font-size:12px;line-height:12px;">16:20</div>
<div style="position:absolute;left:488.17px;top:1322.6px;width:14px;height:4px;background:#56a64b;border-radius:2px"></div>
<div class="t" style="left:510.07px;top:1319px;font-size:12px;line-height:12px;letter-spacing:0.612px;">99th Percentile</div>
<div style="position:absolute;left:608.6700000000001px;top:1322.6px;width:14px;height:4px;background:#e0b400;border-radius:2px"></div>
<div class="t" style="left:631.17px;top:1319px;font-size:12px;line-height:12px;letter-spacing:0.591px;">50th Percentile</div>
<div style="position:absolute;left:729.87px;top:1322.6px;width:14px;height:4px;background:#5794f2;border-radius:2px"></div>
<div class="t" style="left:751.67px;top:1319px;font-size:12px;line-height:12px;letter-spacing:0.655px;">Average</div>
<div style="position:absolute;left:933.33px;top:1086px;width:451px;height:258px;box-sizing:border-box;border:1px solid #e1e2e3;border-radius:2px;background:#fff"></div>
<div class="t" style="left:942.33px;top:1096px;font-size:14px;line-height:14px;letter-spacing:0.940px;-webkit-text-stroke:0.3px currentColor;">Op: Delete</div>
<div class="t" style="left:945.70px;top:1143px;font-size:12px;line-height:12px;letter-spacing:1.051px;">300 ms</div>
<div class="t" style="left:946.40px;top:1190px;font-size:12px;line-height:12px;letter-spacing:0.911px;">200 ms</div>
<div class="t" style="left:945.70px;top:1237px;font-size:12px;line-height:12px;letter-spacing:1.051px;">100 ms</div>
<div class="t" style="left:961.80px;top:1284px;font-size:12px;line-height:12px;letter-spacing:0.833px;">0 ms</div>
<div class="t" style="left:1027.39px;top:1299px;font-size:12px;line-height:12px;">15:30</div>
<div class="t" style="left:1089.19px;top:1299px;font-size:12px;line-height:12px;">15:40</div>
<div class="t" style="left:1150.99px;top:1299px;font-size:12px;line-height:12px;">15:50</div>
<div class="t" style="left:1212.79px;top:1299px;font-size:12px;line-height:12px;">16:00</div>
<div class="t" style="left:1274.59px;top:1299px;font-size:12px;line-height:12px;">16:10</div>
<div class="t" style="left:1336.39px;top:1299px;font-size:12px;line-height:12px;">16:20</div>
<div style="position:absolute;left:946.83px;top:1322.6px;width:14px;height:4px;background:#56a64b;border-radius:2px"></div>
<div class="t" style="left:968.73px;top:1319px;font-size:12px;line-height:12px;letter-spacing:0.612px;">99th Percentile</div>
<div style="position:absolute;left:1067.33px;top:1322.6px;width:14px;height:4px;background:#e0b400;border-radius:2px"></div>
<div class="t" style="left:1089.83px;top:1319px;font-size:12px;line-height:12px;letter-spacing:0.591px;">50th Percentile</div>
<div style="position:absolute;left:1188.53px;top:1322.6px;width:14px;height:4px;background:#5794f2;border-radius:2px"></div>
<div class="t" style="left:1210.33px;top:1319px;font-size:12px;line-height:12px;letter-spacing:0.655px;">Average</div>
<svg style="position:absolute;left:0;top:0" width="1400" height="1400" viewBox="0 0 1400 1400"><g stroke="#e5e5e9" stroke-width="1" shape-rendering="crispEdges"><line x1="82.2" y1="240.5" x2="679.4" y2="240.5" /><line x1="82.2" y1="298.3" x2="679.4" y2="298.3" /><line x1="82.2" y1="355" x2="679.4" y2="355" /><line x1="106.6" y1="223" x2="106.6" y2="359" /><line x1="156.4" y1="223" x2="156.4" y2="359" /><line x1="206.4" y1="223" x2="206.4" y2="359" /><line x1="255.5" y1="223" x2="255.5" y2="359" /><line x1="305.4" y1="223" x2="305.4" y2="359" /><line x1="355.5" y1="223" x2="355.5" y2="359" /><line x1="405.9" y1="223" x2="405.9" y2="359" /><line x1="454.6" y1="223" x2="454.6" y2="359" /><line x1="504.5" y1="223" x2="504.5" y2="359" /><line x1="554.5" y1="223" x2="554.5" y2="359" /><line x1="604.4" y1="223" x2="604.4" y2="359" /><line x1="653.2" y1="223" x2="653.2" y2="359" /></g><g stroke="#e5e5e9" stroke-width="1" shape-rendering="crispEdges"><line x1="753.75" y1="223.25" x2="1367" y2="223.25" /><line x1="753.75" y1="256.5" x2="1367" y2="256.5" /><line x1="753.75" y1="289.25" x2="1367" y2="289.25" /><line x1="753.75" y1="322.25" x2="1367" y2="322.25" /><line x1="753.75" y1="355.25" x2="1367" y2="355.25" /><line x1="779.5" y1="223" x2="779.5" y2="359" /><line x1="830.25" y1="223" x2="830.25" y2="359" /><line x1="881.5" y1="223" x2="881.5" y2="359" /><line x1="932.5" y1="223" x2="932.5" y2="359" /><line x1="983.5" y1="223" x2="983.5" y2="359" /><line x1="1034.5" y1="223" x2="1034.5" y2="359" /><line x1="1085.5" y1="223" x2="1085.5" y2="359" /><line x1="1136.4" y1="223" x2="1136.4" y2="359" /><line x1="1187.3" y1="223" x2="1187.3" y2="359" /><line x1="1239.3" y1="223" x2="1239.3" y2="359" /><line x1="1290.2" y1="223" x2="1290.2" y2="359" /><line x1="1341.4" y1="223" x2="1341.4" y2="359" /></g><g stroke="#e5e5e9" stroke-width="1" shape-rendering="crispEdges"><line x1="99.25" y1="547" x2="679.4" y2="547" /><line x1="99.25" y1="581.25" x2="679.4" y2="581.25" /><line x1="99.25" y1="615" x2="679.4" y2="615" /><line x1="99.25" y1="648.25" x2="679.4" y2="648.25" /><line x1="99.25" y1="681.75" x2="679.4" y2="681.75" /><line x1="122.5" y1="527.5" x2="122.5" y2="686" /><line x1="170.86" y1="527.5" x2="170.86" y2="686" /><line x1="219.22" y1="527.5" x2="219.22" y2="686" /><line x1="267.58" y1="527.5" x2="267.58" y2="686" /><line x1="315.94" y1="527.5" x2="315.94" y2="686" /><line x1="364.3" y1="527.5" x2="364.3" y2="686" /><line x1="412.65999999999997" y1="527.5" x2="412.65999999999997" y2="686" /><line x1="461.02" y1="527.5" x2="461.02" y2="686" /><line x1="509.38" y1="527.5" x2="509.38" y2="686" /><line x1="557.74" y1="527.5" x2="557.74" y2="686" /><line x1="606.1" y1="527.5" x2="606.1" y2="686" /><line x1="654.46" y1="527.5" x2="654.46" y2="686" /></g><g stroke="#e5e5e9" stroke-width="1" shape-rendering="crispEdges"><line x1="753.75" y1="527.25" x2="1367" y2="527.25" /><line x1="753.75" y1="558.25" x2="1367" y2="558.25" /><line x1="753.75" y1="589.25" x2="1367" y2="589.25" /><line x1="753.75" y1="620.25" x2="1367" y2="620.25" /><line x1="753.75" y1="651.25" x2="1367" y2="651.25" /><line x1="753.75" y1="682.25" x2="1367" y2="682.25" /><line x1="779.5" y1="527" x2="779.5" y2="686" /><line x1="830.25" y1="527" x2="830.25" y2="686" /><line x1="881.5" y1="527" x2="881.5" y2="686" /><line x1="932.5" y1="527" x2="932.5" y2="686" /><line x1="983.5" y1="527" x2="983.5" y2="686" /><line x1="1034.5" y1="527" x2="1034.5" y2="686" /><line x1="1085.5" y1="527" x2="1085.5" y2="686" /><line x1="1136.4" y1="527" x2="1136.4" y2="686" /><line x1="1187.3" y1="527" x2="1187.3" y2="686" /><line x1="1239.3" y1="527" x2="1239.3" y2="686" /><line x1="1290.2" y1="527" x2="1290.2" y2="686" /><line x1="1341.4" y1="527" x2="1341.4" y2="686" /></g><g stroke="#e5e5e9" stroke-width="1" shape-rendering="crispEdges"><line x1="63.8" y1="852.8" x2="449.8" y2="852.8" /><line x1="63.8" y1="897" x2="449.8" y2="897" /><line x1="63.8" y1="941.2" x2="449.8" y2="941.2" /><line x1="63.8" y1="985.4" x2="449.8" y2="985.4" /><line x1="111.4" y1="831.3" x2="111.4" y2="989.5" /><line x1="175.8" y1="831.3" x2="175.8" y2="989.5" /><line x1="240.20000000000002" y1="831.3" x2="240.20000000000002" y2="989.5" /><line x1="304.6" y1="831.3" x2="304.6" y2="989.5" /><line x1="369.0" y1="831.3" x2="369.0" y2="989.5" /><line x1="433.4" y1="831.3" x2="433.4" y2="989.5" /></g><g stroke="#e5e5e9" stroke-width="1" shape-rendering="crispEdges"><line x1="522.8" y1="879.3" x2="909.4" y2="879.3" /><line x1="522.8" y1="933.1" x2="909.4" y2="933.1" /><line x1="522.8" y1="986.3" x2="909.4" y2="986.3" /><line x1="570.5" y1="832" x2="570.5" y2="990.3" /><line x1="634.9" y1="832" x2="634.9" y2="990.3" /><line x1="699.3" y1="832" x2="699.3" y2="990.3" /><line x1="763.7" y1="832" x2="763.7" y2="990.3" /><line x1="828.1" y1="832" x2="828.1" y2="990.3" /><line x1="892.5" y1="832" x2="892.5" y2="990.3" /></g><g stroke="#e5e5e9" stroke-width="1" shape-rendering="crispEdges"><line x1="980.7" y1="849.2" x2="1367.4" y2="849.2" /><line x1="980.7" y1="895.2" x2="1367.4" y2="895.2" /><line x1="980.7" y1="940.1" x2="1367.4" y2="940.1" /><line x1="980.7" y1="986" x2="1367.4" y2="986" /><line x1="1028.3" y1="832" x2="1028.3" y2="990" /><line x1="1092.7" y1="832" x2="1092.7" y2="990" /><line x1="1157.1" y1="832" x2="1157.1" y2="990" /><line x1="1221.5" y1="832" x2="1221.5" y2="990" /><line x1="1285.9" y1="832" x2="1285.9" y2="990" /><line x1="1350.3" y1="832" x2="1350.3" y2="990" /></g><g stroke="#e5e5e9" stroke-width="1" shape-rendering="crispEdges"><line x1="63.8" y1="1147" x2="449.8" y2="1147" /><line x1="63.8" y1="1195" x2="449.8" y2="1195" /><line x1="63.8" y1="1242" x2="449.8" y2="1242" /><line x1="63.8" y1="1289.4" x2="449.8" y2="1289.4" /><line x1="111.4" y1="1135.3" x2="111.4" y2="1293.4" /><line x1="175.8" y1="1135.3" x2="175.8" y2="1293.4" /><line x1="240.20000000000002" y1="1135.3" x2="240.20000000000002" y2="1293.4" /><line x1="304.6" y1="1135.3" x2="304.6" y2="1293.4" /><line x1="369.0" y1="1135.3" x2="369.0" y2="1293.4" /><line x1="433.4" y1="1135.3" x2="433.4" y2="1293.4" /></g><g stroke="#e5e5e9" stroke-width="1" shape-rendering="crispEdges"><line x1="548.9" y1="1179.3" x2="909.4" y2="1179.3" /><line x1="548.9" y1="1235.5" x2="909.4" y2="1235.5" /><line x1="548.9" y1="1290.4" x2="909.4" y2="1290.4" /><line x1="593.2" y1="1136" x2="593.2" y2="1294.4" /><line x1="653.3000000000001" y1="1136" x2="653.3000000000001" y2="1294.4" /><line x1="713.4000000000001" y1="1136" x2="713.4000000000001" y2="1294.4" /><line x1="773.5" y1="1136" x2="773.5" y2="1294.4" /><line x1="833.6" y1="1136" x2="833.6" y2="1294.4" /><line x1="893.7" y1="1136" x2="893.7" y2="1294.4" /></g><g stroke="#e5e5e9" stroke-width="1" shape-rendering="crispEdges"><line x1="997.1" y1="1149.1" x2="1367.4" y2="1149.1" /><line x1="997.1" y1="1196.1" x2="1367.4" y2="1196.1" /><line x1="997.1" y1="1243.4" x2="1367.4" y2="1243.4" /><line x1="997.1" y1="1290.3" x2="1367.4" y2="1290.3" /><line x1="1042.4" y1="1136" x2="1042.4" y2="1294.3" /><line x1="1104.2" y1="1136" x2="1104.2" y2="1294.3" /><line x1="1166.0" y1="1136" x2="1166.0" y2="1294.3" /><line x1="1227.8000000000002" y1="1136" x2="1227.8000000000002" y2="1294.3" /><line x1="1289.6000000000001" y1="1136" x2="1289.6000000000001" y2="1294.3" /><line x1="1351.4" y1="1136" x2="1351.4" y2="1294.3" /></g><path d="M82.2,355 L82.2,331.3 L83.2,332.9 L85.9,329.6 L88.6,332.9 L90.7,309.3 L96.1,273.4 L98.8,277.7 L101.4,276.1 L104.6,276.6 L108.4,283.6 L114.3,289.5 L120.7,311.4 L123.9,316.8 L126.1,325.4 L130.9,335.0 L137.9,340.9 L143.2,343.0 L147.5,343.6 L151.8,342.0 L156.1,339.3 L159.3,337.7 L162.5,326.4 L165.7,294.3 L168.4,261.1 L171.1,261.1 L175.4,280.4 L178.6,305.0 L182.9,346.8 L187.1,347.9 L197.9,348.4 L206.4,343.0 L212.9,348.9 L222.5,349.5 L225.0,349.8 L230.4,341.3 L239.5,339.6 L244.3,348.8 L255.0,349.3 L262.5,349.8 L265.2,339.6 L270.5,322.0 L274.3,332.1 L278.0,348.8 L293.6,349.8 L300.0,346.6 L310.7,347.1 L313.9,349.8 L322.5,350.4 L325.2,347.1 L334.3,346.6 L348.2,347.7 L352.5,340.2 L356.8,337.5 L360.0,343.4 L364.3,338.6 L369.6,333.8 L372.3,341.3 L374.8,341.4 L377.5,345.7 L380.2,340.4 L385.0,344.1 L387.7,348.4 L397.9,349.5 L405.9,343.0 L411.8,348.4 L420.4,348.4 L424.6,342.5 L427.9,342.0 L432.1,320.0 L434.3,317.3 L437.0,320.0 L439.1,329.1 L441.8,331.3 L446.6,349.5 L451.4,346.3 L454.6,324.3 L458.9,310.4 L463.8,320.5 L469.1,308.8 L473.9,303.4 L477.1,313.0 L479.3,313.0 L482.0,292.1 L487.3,239.6 L488.9,246.1 L491.6,246.6 L493.8,265.4 L497.0,279.3 L500.7,308.2 L503.9,340.4 L508.2,343.6 L513.6,341.4 L515.0,343.1 L521.1,349.8 L524.1,344.4 L529.6,346.2 L532.0,345.6 L538.7,322.5 L544.1,341.3 L546.6,349.2 L561.1,349.8 L563.6,344.4 L569.0,343.1 L571.5,349.2 L578.8,335.9 L585.4,349.2 L593.9,346.2 L601.2,349.8 L606.1,347.4 L609.7,341.3 L615.8,349.8 L621.9,349.8 L627.9,346.2 L646.1,347.4 L653.4,341.3 L661.9,349.8 L666.8,341.9 L671.0,339.5 L677.7,343.1 L677.7,355 Z" fill="#19730e" fill-opacity="1.0"/><path d="M82.2,331.3 L83.2,332.9 L85.9,329.6 L88.6,332.9 L90.7,309.3 L96.1,273.4 L98.8,277.7 L101.4,276.1 L104.6,276.6 L108.4,283.6 L114.3,289.5 L120.7,311.4 L123.9,316.8 L126.1,325.4 L130.9,335.0 L137.9,340.9 L143.2,343.0 L147.5,343.6 L151.8,342.0 L156.1,339.3 L159.3,337.7 L162.5,326.4 L165.7,294.3 L168.4,261.1 L171.1,261.1 L175.4,280.4 L178.6,305.0 L182.9,346.8 L187.1,347.9 L197.9,348.4 L206.4,343.0 L212.9,348.9 L222.5,349.5 L225.0,349.8 L230.4,341.3 L239.5,339.6 L244.3,348.8 L255.0,349.3 L262.5,349.8 L265.2,339.6 L270.5,322.0 L274.3,332.1 L278.0,348.8 L293.6,349.8 L300.0,346.6 L310.7,347.1 L313.9,349.8 L322.5,350.4 L325.2,347.1 L334.3,346.6 L348.2,347.7 L352.5,340.2 L356.8,337.5 L360.0,343.4 L364.3,338.6 L369.6,333.8 L372.3,341.3 L374.8,341.4 L377.5,345.7 L380.2,340.4 L385.0,344.1 L387.7,348.4 L397.9,349.5 L405.9,343.0 L411.8,348.4 L420.4,348.4 L424.6,342.5 L427.9,342.0 L432.1,320.0 L434.3,317.3 L437.0,320.0 L439.1,329.1 L441.8,331.3 L446.6,349.5 L451.4,346.3 L454.6,324.3 L458.9,310.4 L463.8,320.5 L469.1,308.8 L473.9,303.4 L477.1,313.0 L479.3,313.0 L482.0,292.1 L487.3,239.6 L488.9,246.1 L491.6,246.6 L493.8,265.4 L497.0,279.3 L500.7,308.2 L503.9,340.4 L508.2,343.6 L513.6,341.4 L515.0,343.1 L521.1,349.8 L524.1,344.4 L529.6,346.2 L532.0,345.6 L538.7,322.5 L544.1,341.3 L546.6,349.2 L561.1,349.8 L563.6,344.4 L569.0,343.1 L571.5,349.2 L578.8,335.9 L585.4,349.2 L593.9,346.2 L601.2,349.8 L606.1,347.4 L609.7,341.3 L615.8,349.8 L621.9,349.8 L627.9,346.2 L646.1,347.4 L653.4,341.3 L661.9,349.8 L666.8,341.9 L671.0,339.5 L677.7,343.1" fill="none" stroke="#c9c76a" stroke-width="0.9" stroke-opacity="0.9" stroke-linejoin="round" stroke-linecap="round"/><path d="M82.2,355 L82.2,350.5 L83.2,350.5 L84.2,350.5 L85.2,350.5 L86.2,350.5 L87.2,350.5 L88.2,350.5 L89.2,350.5 L90.2,350.5 L91.2,350.5 L92.2,350.5 L93.2,350.5 L94.2,350.5 L95.2,350.5 L96.2,350.5 L97.2,350.5 L98.2,350.5 L99.2,350.5 L100.2,350.5 L101.2,350.5 L102.2,350.5 L103.2,350.5 L104.2,350.5 L105.2,350.5 L106.2,350.5 L107.2,350.5 L108.2,350.5 L109.2,350.5 L110.2,350.5 L111.2,350.5 L112.2,350.5 L113.2,350.5 L114.2,350.5 L115.2,350.5 L116.2,350.5 L117.2,350.5 L118.2,350.5 L119.2,350.5 L120.2,350.5 L121.2,350.5 L122.2,350.5 L123.2,350.5 L124.2,350.5 L125.2,350.5 L126.2,350.5 L127.2,350.5 L128.2,350.5 L129.2,350.5 L130.2,350.5 L131.2,350.5 L132.2,350.5 L133.2,350.5 L134.2,350.5 L135.2,350.5 L136.2,350.5 L137.2,350.5 L138.2,350.5 L139.2,350.5 L140.2,350.5 L141.2,350.5 L142.2,350.5 L143.2,350.5 L144.2,350.5 L145.2,350.5 L146.2,350.5 L147.2,350.5 L148.2,350.5 L149.2,350.5 L150.2,350.5 L151.2,350.5 L152.2,350.5 L153.2,350.5 L154.2,350.5 L155.2,350.5 L156.2,350.5 L157.0,349.5 L157.2,349.4 L158.2,349.2 L159.2,348.9 L159.3,348.9 L160.2,346.5 L161.2,343.8 L162.2,341.2 L163.2,338.5 L164.2,335.8 L165.2,333.1 L165.7,331.8 L166.2,332.8 L167.2,334.8 L168.2,336.8 L169.2,338.7 L170.2,340.7 L171.1,342.5 L171.2,343.0 L172.2,347.7 L172.7,350.0 L173.2,350.5 L174.2,350.5 L175.2,350.5 L176.2,350.5 L177.2,350.5 L178.2,350.5 L179.2,350.5 L180.2,350.5 L181.2,350.5 L182.2,350.5 L183.2,350.5 L184.2,350.5 L185.2,350.5 L186.2,350.5 L187.2,350.5 L188.2,350.5 L189.2,350.5 L190.2,350.5 L191.2,350.5 L192.2,350.5 L193.2,350.5 L194.2,350.5 L195.2,350.5 L196.2,350.5 L197.2,350.5 L198.2,350.5 L199.2,350.5 L200.2,350.5 L201.2,350.5 L202.2,350.5 L203.2,350.5 L204.2,350.5 L205.2,350.5 L206.2,350.5 L207.2,350.5 L208.2,350.5 L209.2,350.5 L210.2,350.5 L211.2,350.5 L212.2,350.5 L213.2,350.5 L214.2,350.5 L215.2,350.5 L216.2,350.5 L217.2,350.5 L218.2,350.5 L219.2,350.5 L220.2,350.5 L221.2,350.5 L222.2,350.5 L223.2,350.5 L224.2,350.5 L225.2,350.5 L226.2,350.5 L227.0,349.5 L227.2,349.0 L228.2,346.6 L229.2,344.2 L230.2,341.8 L230.4,341.3 L231.2,341.2 L232.2,341.0 L233.2,340.8 L234.2,340.6 L235.2,340.4 L236.2,340.2 L237.2,340.0 L238.2,339.8 L239.2,339.7 L239.5,339.6 L240.2,340.9 L241.2,342.9 L242.2,344.8 L243.2,346.7 L244.2,348.6 L244.3,348.8 L245.2,350.5 L246.2,350.5 L247.2,350.5 L248.2,350.5 L249.2,350.5 L250.2,350.5 L251.2,350.5 L252.2,350.5 L253.2,350.5 L254.2,350.5 L255.2,350.5 L256.2,350.5 L257.2,350.5 L258.2,350.5 L259.2,350.5 L260.2,350.5 L261.2,350.5 L262.2,350.5 L262.5,350.0 L263.2,347.9 L264.2,344.8 L265.2,341.7 L265.7,340.2 L266.2,340.1 L267.2,339.8 L268.2,339.6 L269.2,339.3 L270.0,339.1 L270.2,339.9 L271.2,343.6 L272.2,347.4 L272.7,349.3 L273.2,350.5 L274.2,350.5 L275.2,350.5 L276.2,350.5 L277.2,350.5 L278.2,350.5 L279.2,350.5 L280.2,350.5 L281.2,350.5 L282.2,350.5 L283.2,350.5 L284.2,350.5 L285.2,350.5 L286.2,350.5 L287.2,350.5 L288.2,350.5 L289.2,350.5 L290.2,350.5 L291.2,350.5 L292.2,350.5 L293.2,350.5 L294.2,350.5 L295.2,350.5 L296.2,350.5 L297.2,350.5 L298.2,350.5 L299.2,350.5 L300.2,350.5 L301.2,350.5 L302.2,350.5 L303.2,350.5 L304.2,350.5 L305.2,350.5 L306.2,350.5 L307.2,350.5 L308.2,350.5 L309.2,350.5 L310.2,350.5 L311.2,350.5 L312.2,350.5 L313.2,350.5 L314.2,350.5 L315.2,350.5 L316.2,350.5 L317.2,350.5 L318.2,350.5 L319.2,350.5 L320.2,350.5 L321.2,350.5 L322.2,350.5 L323.2,350.5 L324.2,350.5 L325.2,350.5 L326.2,350.5 L327.2,350.5 L328.2,350.5 L329.2,350.5 L330.2,350.5 L331.2,350.5 L332.2,350.5 L333.2,350.5 L334.2,350.5 L335.2,350.5 L336.2,350.5 L337.2,350.5 L338.2,350.5 L339.2,350.5 L340.2,350.5 L341.2,350.5 L342.2,350.5 L343.2,350.5 L344.2,350.5 L345.2,350.5 L346.2,350.5 L347.2,350.5 L348.0,349.5 L348.2,349.1 L349.2,347.0 L350.2,345.0 L351.2,342.9 L352.2,340.8 L352.5,340.2 L353.2,339.9 L354.2,339.5 L355.2,339.1 L356.2,338.6 L356.3,338.6 L357.2,339.8 L358.2,341.1 L359.2,342.4 L360.0,343.4 L360.2,343.3 L361.2,342.9 L362.2,342.4 L363.2,342.0 L364.2,341.5 L365.2,341.1 L366.2,340.6 L367.2,340.2 L368.2,339.7 L369.2,339.3 L369.6,339.1 L370.0,338.2 L370.2,338.5 L371.2,340.0 L372.1,341.4 L372.2,341.5 L373.2,342.5 L374.2,343.5 L375.2,344.5 L376.2,345.5 L376.4,345.7 L377.2,346.7 L378.2,348.0 L379.0,349.0 L379.2,350.5 L380.2,350.5 L381.2,350.5 L382.2,350.5 L383.2,350.5 L384.2,350.5 L385.2,350.5 L386.2,350.5 L387.2,350.5 L388.2,350.5 L389.2,350.5 L390.2,350.5 L391.2,350.5 L392.2,350.5 L393.2,350.5 L394.2,350.5 L395.2,350.5 L396.2,350.5 L397.2,350.5 L398.2,350.5 L399.2,350.5 L400.2,350.5 L401.2,350.5 L402.2,350.5 L403.2,350.5 L404.2,350.5 L405.2,350.5 L406.2,350.5 L407.2,350.5 L408.2,350.5 L409.2,350.5 L410.2,350.5 L411.2,350.5 L412.2,350.5 L413.2,350.5 L414.2,350.5 L415.2,350.5 L416.2,350.5 L417.2,350.5 L418.2,350.5 L419.0,349.5 L419.2,349.2 L420.2,347.9 L421.2,346.5 L422.2,345.1 L423.2,343.7 L424.1,342.5 L424.2,342.6 L425.2,343.7 L426.2,344.9 L427.2,346.0 L427.9,346.8 L428.2,347.1 L429.2,347.9 L430.2,348.8 L431.0,349.5 L431.2,350.5 L432.2,350.5 L433.2,350.5 L434.2,350.5 L435.2,350.5 L436.2,350.5 L437.2,350.5 L438.2,350.5 L439.2,350.5 L440.2,350.5 L441.2,350.5 L442.2,350.5 L443.2,350.5 L444.2,350.5 L445.2,350.5 L446.2,350.5 L447.2,350.5 L448.2,350.5 L449.2,350.5 L450.2,350.5 L451.2,350.5 L452.2,350.5 L453.2,350.5 L454.2,350.5 L455.2,350.5 L456.2,350.5 L457.2,350.5 L458.2,350.5 L459.2,350.5 L460.2,350.5 L461.2,350.5 L462.2,350.5 L463.2,350.5 L464.2,350.5 L465.2,350.5 L466.2,350.5 L467.2,350.5 L468.2,350.5 L469.0,349.5 L469.2,349.1 L470.2,347.3 L471.2,345.4 L472.2,343.6 L473.2,341.7 L474.2,339.9 L474.5,339.3 L475.2,340.4 L476.2,341.9 L477.2,343.5 L478.2,345.0 L479.2,346.6 L480.2,348.1 L481.2,349.7 L481.4,350.0 L482.2,350.5 L483.2,350.5 L484.2,350.5 L485.2,350.5 L486.2,350.5 L487.2,350.5 L488.2,350.5 L489.2,350.5 L490.2,350.5 L491.2,350.5 L492.2,350.5 L493.2,350.5 L494.2,350.5 L495.2,350.5 L496.2,350.5 L497.2,350.5 L498.2,350.5 L499.2,350.5 L500.2,350.5 L501.2,350.5 L502.2,350.5 L503.2,350.5 L504.2,350.5 L505.2,350.5 L506.2,350.5 L507.2,350.5 L508.2,350.5 L509.2,350.5 L510.2,350.5 L511.2,350.5 L512.2,350.5 L513.2,350.5 L514.2,350.5 L515.2,350.5 L516.2,350.5 L517.2,350.5 L518.2,350.5 L519.2,350.5 L520.2,350.5 L521.2,350.5 L522.2,350.5 L523.2,350.5 L524.2,350.5 L525.2,350.5 L526.2,350.5 L527.2,350.5 L528.2,350.5 L529.2,350.5 L530.2,350.5 L531.0,349.0 L531.2,348.8 L532.2,348.1 L533.2,347.3 L534.2,346.5 L535.2,345.7 L536.2,344.9 L537.2,344.1 L538.2,343.4 L539.2,342.6 L539.3,342.5 L540.2,342.5 L541.2,342.5 L542.2,342.5 L543.2,342.5 L544.1,342.5 L544.2,342.9 L545.2,346.6 L546.0,349.5 L546.2,350.5 L547.2,350.5 L548.2,350.5 L549.2,350.5 L550.2,350.5 L551.2,350.5 L552.2,350.5 L553.2,350.5 L554.2,350.5 L555.2,350.5 L556.2,350.5 L557.2,350.5 L558.2,350.5 L559.2,350.5 L560.2,350.5 L561.2,350.5 L562.2,350.5 L563.2,350.5 L564.2,350.5 L565.2,350.5 L566.2,350.5 L567.2,350.5 L568.2,350.5 L569.2,350.5 L570.2,350.5 L571.0,349.5 L571.2,349.2 L572.2,347.5 L573.2,345.8 L574.2,344.2 L575.2,342.5 L576.2,340.8 L577.2,339.2 L578.2,337.5 L578.8,336.5 L579.2,337.4 L580.2,339.5 L581.2,341.7 L582.2,343.9 L583.2,346.0 L584.2,348.2 L584.8,349.5 L585.2,350.5 L586.2,350.5 L587.2,350.5 L588.2,350.5 L589.2,350.5 L590.2,350.5 L591.2,350.5 L592.2,350.5 L593.2,350.5 L594.2,350.5 L595.2,350.5 L596.2,350.5 L597.2,350.5 L598.2,350.5 L599.2,350.5 L600.2,350.5 L601.2,350.5 L602.2,350.5 L603.2,350.5 L604.2,350.5 L605.2,350.5 L606.2,350.5 L607.0,349.5 L607.2,349.0 L608.2,346.7 L609.2,344.3 L609.7,343.1 L610.2,343.1 L611.2,343.1 L612.2,343.1 L613.2,343.1 L614.2,343.1 L614.6,343.1 L615.2,345.4 L616.2,349.2 L616.4,350.0 L617.2,350.5 L618.2,350.5 L619.2,350.5 L620.2,350.5 L621.2,350.5 L622.2,350.5 L623.2,350.5 L624.2,350.5 L625.2,350.5 L626.2,350.5 L627.2,350.5 L628.2,350.5 L629.2,350.5 L630.2,350.5 L631.2,350.5 L632.2,350.5 L633.2,350.5 L634.2,350.5 L635.2,350.5 L636.2,350.5 L637.2,350.5 L638.2,350.5 L639.2,350.5 L640.2,350.5 L641.2,350.5 L642.2,350.5 L643.2,350.5 L644.2,350.5 L645.2,350.5 L646.2,350.5 L647.2,350.5 L648.2,350.5 L649.2,350.5 L650.2,350.5 L651.2,350.5 L652.2,350.5 L653.2,350.5 L654.2,350.5 L655.2,350.5 L656.2,350.5 L657.2,350.5 L658.2,350.5 L659.2,350.5 L660.2,350.5 L661.2,350.5 L662.2,350.5 L663.2,350.5 L664.2,350.5 L665.2,350.5 L666.2,350.5 L667.2,350.5 L668.0,345.0 L668.2,344.7 L669.2,343.4 L670.2,342.1 L671.0,341.0 L671.2,341.1 L672.2,341.4 L673.2,341.7 L674.2,342.0 L675.2,342.3 L676.2,342.6 L677.2,342.9 L677.7,343.1 L677.7,355 Z" fill="#7661a8" fill-opacity="1.0"/><path d="M82.2,355 L82.2,343.6 L83.8,343.6 L85.4,343.6 L87.0,344.7 L88.6,348.1 L90.2,350.2 L91.8,349.2 L93.4,350.3 L95.0,349.2 L96.6,350.3 L98.2,349.2 L99.8,350.0 L101.4,348.9 L103.0,350.6 L104.6,349.2 L106.2,350.1 L107.8,348.8 L109.4,350.7 L111.0,348.8 L112.6,350.2 L114.2,348.5 L115.8,350.0 L117.4,348.6 L119.0,350.2 L120.6,349.2 L122.2,350.0 L123.8,349.0 L125.4,350.6 L127.0,349.1 L128.6,350.4 L130.2,348.8 L131.8,350.2 L133.4,348.8 L135.0,350.0 L136.6,349.2 L138.2,350.1 L139.8,348.7 L141.4,350.3 L143.0,349.0 L144.6,350.4 L146.2,348.9 L147.8,350.2 L149.4,348.7 L151.0,350.5 L152.6,349.1 L154.2,350.4 L155.8,348.9 L157.4,350.6 L159.0,348.7 L160.6,350.2 L162.2,348.5 L163.8,350.0 L165.4,348.9 L167.0,350.5 L168.6,349.2 L170.2,350.3 L171.8,349.2 L173.4,350.4 L175.0,348.7 L176.6,350.4 L178.2,348.6 L179.8,350.2 L181.4,348.7 L183.0,350.4 L184.6,348.8 L186.2,350.3 L187.8,348.6 L189.4,350.7 L191.0,348.9 L192.6,350.4 L194.2,349.2 L195.8,350.5 L197.4,348.8 L199.0,350.7 L200.6,348.6 L202.2,348.3 L203.8,347.7 L205.4,347.2 L207.0,347.1 L208.6,347.9 L210.2,348.6 L211.8,349.4 L213.4,349.2 L215.0,350.5 L216.6,349.2 L218.2,350.1 L219.8,349.0 L221.4,350.6 L223.0,349.2 L224.6,350.3 L226.2,348.7 L227.8,346.5 L229.4,344.3 L231.0,343.2 L232.6,344.0 L234.2,344.8 L235.8,345.6 L237.4,346.4 L239.0,347.2 L240.6,348.1 L242.2,349.1 L243.8,350.1 L245.4,349.1 L247.0,350.3 L248.6,348.8 L250.2,350.1 L251.8,349.3 L253.4,350.3 L255.0,349.0 L256.6,350.4 L258.2,348.5 L259.8,350.5 L261.4,348.9 L263.0,350.4 L264.6,348.7 L266.2,350.0 L267.8,348.6 L269.4,350.5 L271.0,348.6 L272.6,350.5 L274.2,349.0 L275.8,350.2 L277.4,349.2 L279.0,350.4 L280.6,349.2 L282.2,350.0 L283.8,349.1 L285.4,350.1 L287.0,349.0 L288.6,350.0 L290.2,349.3 L291.8,350.0 L293.4,349.2 L295.0,350.2 L296.6,349.3 L298.2,350.6 L299.8,348.8 L301.4,350.0 L303.0,349.1 L304.6,350.2 L306.2,349.0 L307.8,350.0 L309.4,348.6 L311.0,350.7 L312.6,348.9 L314.2,350.3 L315.8,349.2 L317.4,350.0 L319.0,349.0 L320.6,350.1 L322.2,348.6 L323.8,350.1 L325.4,349.3 L327.0,350.7 L328.6,348.9 L330.2,348.9 L331.8,347.9 L333.4,347.8 L335.0,347.9 L336.6,348.0 L338.2,348.1 L339.8,348.2 L341.4,348.3 L343.0,348.5 L344.6,348.6 L346.2,348.7 L347.8,348.8 L349.4,348.2 L351.0,347.4 L352.6,346.8 L354.2,346.4 L355.8,345.9 L357.4,345.4 L359.0,345.0 L360.6,345.6 L362.2,346.2 L363.8,346.7 L365.4,347.3 L367.0,347.4 L368.6,347.3 L370.2,347.1 L371.8,347.0 L373.4,347.7 L375.0,348.5 L376.6,348.5 L378.2,346.9 L379.8,343.4 L381.4,343.6 L383.0,345.1 L384.6,346.5 L386.2,348.0 L387.8,349.8 L389.4,349.1 L391.0,350.1 L392.6,348.8 L394.2,350.6 L395.8,348.6 L397.4,350.3 L399.0,348.8 L400.6,349.6 L402.2,348.4 L403.8,347.2 L405.4,347.8 L407.0,349.1 L408.6,348.7 L410.2,350.3 L411.8,349.1 L413.4,350.5 L415.0,349.0 L416.6,350.5 L418.2,348.5 L419.8,350.2 L421.4,349.0 L423.0,350.7 L424.6,348.7 L426.2,350.1 L427.8,349.2 L429.4,350.0 L431.0,348.6 L432.6,350.6 L434.2,349.2 L435.8,350.6 L437.4,348.5 L439.0,350.4 L440.6,349.0 L442.2,350.4 L443.8,349.2 L445.4,349.9 L447.0,348.5 L448.6,350.4 L450.2,348.9 L451.8,350.6 L453.4,348.9 L455.0,350.6 L456.6,348.6 L458.2,350.1 L459.8,349.1 L461.4,350.2 L463.0,349.1 L464.6,350.4 L466.2,349.1 L467.8,350.3 L469.4,349.2 L471.0,350.6 L472.6,349.0 L474.2,350.3 L475.8,348.8 L477.4,350.6 L479.0,348.9 L480.6,350.6 L482.2,348.9 L483.8,350.3 L485.4,348.9 L487.0,349.9 L488.6,348.9 L490.2,350.1 L491.8,349.3 L493.4,350.5 L495.0,349.1 L496.6,350.3 L498.2,348.7 L499.8,350.4 L501.4,349.0 L503.0,350.3 L504.6,348.8 L506.2,350.5 L507.8,349.2 L509.4,350.4 L511.0,348.7 L512.6,347.5 L514.2,347.1 L515.8,347.9 L517.4,348.7 L519.0,349.5 L520.6,348.6 L522.2,347.6 L523.8,345.9 L525.4,345.7 L527.0,345.9 L528.6,346.1 L530.2,347.0 L531.8,349.2 L533.4,348.9 L535.0,350.7 L536.6,348.7 L538.2,350.6 L539.8,348.5 L541.4,350.1 L543.0,348.8 L544.6,350.7 L546.2,348.6 L547.8,350.0 L549.4,349.2 L551.0,350.3 L552.6,349.2 L554.2,350.1 L555.8,349.2 L557.4,350.4 L559.0,348.7 L560.6,350.6 L562.2,348.2 L563.8,346.2 L565.4,346.2 L567.0,346.2 L568.6,346.2 L570.2,347.8 L571.8,349.1 L573.4,350.7 L575.0,349.0 L576.6,349.7 L578.2,348.5 L579.8,348.3 L581.4,348.4 L583.0,349.1 L584.6,348.9 L586.2,350.2 L587.8,349.1 L589.4,350.2 L591.0,348.7 L592.6,349.9 L594.2,348.8 L595.8,350.3 L597.4,349.3 L599.0,350.2 L600.6,348.8 L602.2,350.3 L603.8,349.2 L605.4,350.7 L607.0,348.7 L608.6,350.7 L610.2,349.2 L611.8,350.1 L613.4,349.2 L615.0,350.5 L616.6,349.1 L618.2,350.0 L619.8,348.9 L621.4,350.6 L623.0,348.6 L624.6,350.1 L626.2,349.2 L627.8,350.6 L629.4,348.8 L631.0,350.5 L632.6,349.2 L634.2,350.0 L635.8,348.7 L637.4,350.3 L639.0,349.2 L640.6,349.8 L642.2,348.8 L643.8,348.9 L645.4,348.4 L647.0,347.9 L648.6,347.4 L650.2,347.6 L651.8,347.8 L653.4,348.1 L655.0,348.6 L656.6,349.0 L658.2,349.1 L659.8,349.9 L661.4,348.9 L663.0,350.0 L664.6,347.1 L666.2,344.2 L667.8,342.6 L669.4,341.8 L671.0,341.0 L672.6,341.4 L674.2,342.7 L675.8,344.0 L677.4,345.4 L677.4,355 Z" fill="#e02f44" fill-opacity="1.0"/><path d="M82.2,355 L82.2,347.3 L84.2,348.0 L86.2,348.6 L88.2,353.0 L90.2,353.0 L92.2,353.6 L94.2,353.2 L96.2,353.8 L98.2,353.2 L100.2,353.6 L102.2,352.9 L104.2,353.7 L106.2,353.0 L108.2,353.7 L110.2,353.0 L112.2,353.6 L114.2,353.0 L116.2,353.9 L118.2,353.1 L120.2,353.8 L122.2,353.0 L124.2,353.6 L126.2,353.0 L128.2,353.8 L130.2,353.1 L132.2,353.6 L134.2,352.9 L136.2,353.7 L138.2,353.0 L140.2,353.9 L142.2,353.0 L144.2,353.9 L146.2,353.1 L148.2,353.8 L150.2,353.1 L152.2,353.9 L154.2,352.9 L156.2,353.6 L158.2,353.2 L160.2,353.6 L162.2,352.9 L164.2,353.7 L166.2,353.0 L168.2,353.7 L170.2,353.1 L172.2,353.7 L174.2,353.1 L176.2,353.8 L178.2,353.0 L180.2,353.9 L182.2,353.0 L184.2,353.9 L186.2,353.0 L188.2,353.9 L190.2,353.0 L192.2,353.6 L194.2,352.9 L196.2,352.6 L198.2,351.8 L200.2,351.0 L202.2,350.8 L204.2,351.7 L206.2,352.7 L208.2,353.8 L210.2,353.2 L212.2,353.6 L214.2,353.0 L216.2,353.9 L218.2,353.2 L220.2,353.8 L222.2,353.1 L224.2,353.6 L226.2,353.1 L228.2,352.4 L230.2,346.7 L232.2,346.1 L234.2,348.0 L236.2,350.5 L238.2,350.8 L240.2,351.2 L242.2,351.7 L244.2,353.9 L246.2,353.1 L248.2,353.9 L250.2,353.1 L252.2,353.6 L254.2,353.0 L256.2,353.6 L258.2,353.2 L260.2,353.7 L262.2,353.0 L264.2,353.6 L266.2,353.2 L268.2,353.9 L270.2,353.1 L272.2,353.9 L274.2,352.9 L276.2,353.7 L278.2,353.1 L280.2,353.7 L282.2,353.0 L284.2,353.8 L286.2,353.1 L288.2,353.8 L290.2,352.9 L292.2,353.7 L294.2,353.1 L296.2,353.8 L298.2,353.2 L300.2,353.7 L302.2,352.9 L304.2,353.7 L306.2,353.1 L308.2,353.6 L310.2,353.1 L312.2,353.8 L314.2,353.2 L316.2,353.8 L318.2,353.0 L320.2,353.6 L322.2,353.0 L324.2,353.7 L326.2,353.0 L328.2,353.7 L330.2,353.0 L332.2,352.5 L334.2,352.5 L336.2,352.5 L338.2,352.5 L340.2,352.5 L342.2,352.5 L344.2,352.5 L346.2,352.1 L348.2,351.4 L350.2,350.7 L352.2,350.0 L354.2,349.3 L356.2,349.1 L358.2,350.3 L360.2,351.4 L362.2,352.6 L364.2,353.6 L366.2,353.1 L368.2,353.8 L370.2,353.1 L372.2,353.6 L374.2,353.0 L376.2,351.3 L378.2,349.1 L380.2,346.9 L382.2,347.9 L384.2,350.1 L386.2,352.2 L388.2,353.7 L390.2,353.0 L392.2,353.7 L394.2,353.0 L396.2,353.6 L398.2,353.1 L400.2,352.5 L402.2,351.8 L404.2,351.1 L406.2,352.4 L408.2,353.6 L410.2,353.1 L412.2,353.6 L414.2,353.0 L416.2,353.8 L418.2,353.2 L420.2,353.6 L422.2,353.0 L424.2,353.8 L426.2,353.0 L428.2,353.7 L430.2,353.2 L432.2,353.7 L434.2,353.0 L436.2,353.6 L438.2,353.1 L440.2,353.7 L442.2,353.1 L444.2,353.7 L446.2,352.9 L448.2,353.6 L450.2,353.2 L452.2,353.9 L454.2,352.9 L456.2,353.9 L458.2,353.1 L460.2,353.9 L462.2,352.9 L464.2,353.6 L466.2,353.0 L468.2,353.8 L470.2,353.0 L472.2,353.7 L474.2,353.1 L476.2,353.7 L478.2,353.2 L480.2,353.6 L482.2,353.0 L484.2,353.7 L486.2,353.0 L488.2,353.6 L490.2,352.9 L492.2,353.8 L494.2,352.9 L496.2,353.9 L498.2,352.9 L500.2,353.8 L502.2,353.2 L504.2,353.8 L506.2,353.2 L508.2,353.7 L510.2,353.0 L512.2,353.7 L514.2,353.1 L516.2,353.9 L518.2,353.0 L520.2,353.7 L522.2,353.2 L524.2,353.9 L526.2,353.1 L528.2,353.8 L530.2,353.1 L532.2,353.6 L534.2,353.1 L536.2,353.8 L538.2,353.2 L540.2,353.8 L542.2,352.9 L544.2,353.8 L546.2,353.0 L548.2,353.6 L550.2,353.0 L552.2,353.9 L554.2,353.2 L556.2,353.6 L558.2,353.2 L560.2,353.7 L562.2,353.1 L564.2,351.2 L566.2,350.4 L568.2,350.4 L570.2,351.2 L572.2,353.6 L574.2,353.2 L576.2,353.6 L578.2,352.9 L580.2,353.8 L582.2,353.2 L584.2,353.7 L586.2,353.1 L588.2,353.7 L590.2,353.1 L592.2,353.8 L594.2,353.0 L596.2,353.7 L598.2,353.2 L600.2,353.7 L602.2,353.2 L604.2,353.7 L606.2,353.0 L608.2,353.7 L610.2,353.2 L612.2,353.6 L614.2,353.1 L616.2,353.8 L618.2,353.0 L620.2,353.7 L622.2,353.0 L624.2,353.8 L626.2,353.1 L628.2,353.7 L630.2,353.1 L632.2,353.8 L634.2,353.1 L636.2,353.8 L638.2,353.1 L640.2,353.4 L642.2,353.0 L644.2,352.7 L646.2,352.3 L648.2,352.1 L650.2,352.6 L652.2,353.1 L654.2,352.9 L656.2,353.7 L658.2,352.9 L660.2,353.6 L662.2,352.0 L664.2,350.3 L666.2,348.8 L668.2,347.4 L670.2,346.0 L672.2,345.2 L674.2,346.2 L676.2,347.2 L676.2,355 Z" fill="#fa6400" fill-opacity="1.0"/><rect x="82.2" y="353.6" width="595.5" height="1.4" fill="#e0b400"/><path d="M99.3,682 L99.3,654.0 L100.7,656.9 L103.0,652.9 L105.9,656.3 L109.9,600.9 L113.3,586.6 L115.0,592.3 L119.6,589.4 L124.7,599.1 L129.9,604.9 L143.0,654.0 L149.9,663.7 L159.0,668.3 L163.6,668.9 L171.6,663.1 L175.0,660.3 L179.6,592.9 L183.6,572.3 L187.6,581.4 L192.7,619.1 L196.7,672.9 L200.1,673.4 L213.9,674.6 L219.6,667.1 L225.3,675.1 L236.7,676.3 L240.0,673.9 L243.2,666.4 L246.4,668.0 L252.3,663.8 L255.0,671.8 L259.8,677.1 L262.5,675.5 L265.2,677.7 L267.9,675.0 L272.1,673.9 L274.8,676.6 L277.0,665.4 L282.3,643.4 L287.1,661.1 L289.3,674.5 L293.6,677.1 L304.3,676.6 L310.7,672.3 L321.4,673.4 L324.6,676.6 L334.3,673.9 L342.9,674.5 L350.4,671.3 L357.9,673.9 L362.1,664.3 L366.4,661.6 L369.6,669.6 L373.9,662.1 L378.8,656.8 L381.4,665.4 L385.7,671.3 L388.2,664.8 L392.5,669.1 L396.8,673.9 L402.1,674.5 L405.9,676.1 L412.9,668.6 L420.4,674.5 L426.3,673.9 L431.1,667.5 L434.8,666.4 L439.1,639.6 L440.7,638.0 L443.9,641.8 L446.1,652.5 L449.3,655.2 L453.6,676.6 L457.9,673.9 L463.2,634.3 L465.9,630.0 L470.2,642.3 L475.0,627.9 L479.8,621.4 L483.0,632.1 L485.2,632.1 L487.9,592.5 L492.1,547.0 L494.3,551.8 L497.0,556.6 L501.8,594.6 L508.2,662.7 L512.0,668.6 L517.9,667.0 L525.4,676.1 L528.6,670.2 L532.8,670.3 L536.1,673.1 L542.7,644.8 L547.7,666.4 L550.5,675.3 L557.1,673.6 L564.3,676.4 L567.1,670.3 L571.5,668.6 L574.3,675.3 L578.7,663.7 L581.5,659.2 L586.5,670.9 L589.8,675.3 L596.4,672.0 L600.9,672.5 L606.4,672.5 L610.8,666.4 L615.3,669.2 L618.6,675.8 L623.0,676.4 L629.6,672.5 L639.6,672.0 L646.3,673.6 L654.0,665.3 L658.4,668.1 L663.4,675.3 L666.2,667.0 L671.2,663.7 L677.8,668.1 L677.8,682 Z" fill="#3274d9" fill-opacity="1.0"/><path d="M99.3,682 L99.3,658.5 L100.7,661.4 L103.0,657.4 L105.9,660.8 L109.9,602.7 L113.3,588.4 L115.0,594.1 L119.6,591.2 L124.7,600.9 L129.9,606.7 L143.0,655.8 L149.9,665.5 L159.0,670.1 L163.6,670.7 L171.6,664.9 L175.0,662.1 L179.6,594.7 L183.6,574.1 L187.6,583.2 L192.7,620.9 L196.7,674.7 L200.1,675.2 L213.9,676.4 L219.6,668.9 L225.3,676.9 L236.7,678.1 L240.0,675.7 L243.2,668.2 L246.4,669.8 L252.3,665.6 L255.0,673.6 L259.8,678.9 L262.5,677.3 L265.2,679.5 L267.9,676.8 L272.1,675.7 L274.8,678.4 L277.0,667.2 L282.3,645.2 L287.1,662.9 L289.3,676.3 L293.6,678.9 L304.3,678.4 L310.7,674.1 L321.4,675.2 L324.6,678.4 L334.3,675.7 L342.9,676.3 L350.4,673.1 L357.9,675.7 L362.1,666.1 L366.4,663.4 L369.6,671.4 L373.9,663.9 L378.8,658.6 L381.4,667.2 L385.7,673.1 L388.2,666.6 L392.5,670.9 L396.8,675.7 L402.1,676.3 L405.9,677.9 L412.9,670.4 L420.4,676.3 L426.3,675.7 L431.1,669.3 L434.8,668.2 L439.1,641.4 L440.7,639.8 L443.9,643.6 L446.1,654.3 L449.3,657.0 L453.6,678.4 L457.9,675.7 L463.2,636.1 L465.9,631.8 L470.2,644.1 L475.0,629.7 L479.8,623.2 L483.0,633.9 L485.2,633.9 L487.9,594.3 L492.1,548.8 L494.3,553.6 L497.0,558.4 L501.8,596.4 L508.2,664.5 L512.0,670.4 L517.9,668.8 L525.4,677.9 L528.6,672.0 L532.8,672.1 L536.1,674.9 L542.7,646.6 L547.7,668.2 L550.5,677.1 L557.1,675.4 L564.3,678.2 L567.1,672.1 L571.5,670.4 L574.3,677.1 L578.7,665.5 L581.5,661.0 L586.5,672.7 L589.8,677.1 L596.4,673.8 L600.9,674.3 L606.4,674.3 L610.8,668.2 L615.3,671.0 L618.6,677.6 L623.0,678.2 L629.6,674.3 L639.6,673.8 L646.3,675.4 L654.0,668.3 L658.4,671.1 L663.4,677.1 L666.2,671.5 L671.2,668.2 L677.8,672.6 L677.8,682 Z" fill="#e02f44" fill-opacity="1.0"/><path d="M99.3,682 L99.3,672.3 L101.0,672.3 L102.7,673.1 L104.4,675.2 L106.1,675.6 L107.8,676.7 L109.5,675.8 L111.2,676.6 L112.9,675.5 L114.6,676.8 L116.3,675.8 L118.0,676.5 L119.7,675.8 L121.4,676.8 L123.1,675.5 L124.8,676.4 L126.5,675.3 L128.2,676.9 L129.9,675.5 L131.6,676.7 L133.3,675.8 L135.0,676.0 L136.7,675.0 L138.4,674.9 L140.1,674.7 L141.8,675.0 L143.5,675.8 L145.2,676.6 L146.9,675.6 L148.6,676.8 L150.3,675.6 L152.0,676.7 L153.7,675.6 L155.4,676.7 L157.1,675.6 L158.8,676.5 L160.5,675.3 L162.2,676.9 L163.9,675.4 L165.6,676.7 L167.3,675.7 L169.0,676.5 L170.7,675.7 L172.4,676.4 L174.1,675.4 L175.8,676.6 L177.5,669.2 L179.2,660.4 L180.9,657.5 L182.6,661.4 L184.3,665.6 L186.0,671.4 L187.7,675.4 L189.4,676.6 L191.1,675.3 L192.8,676.6 L194.5,675.8 L196.2,676.7 L197.9,675.4 L199.6,676.5 L201.3,675.8 L203.0,676.5 L204.7,675.6 L206.4,676.8 L208.1,675.9 L209.8,676.5 L211.5,676.2 L213.2,676.4 L214.9,675.4 L216.6,676.4 L218.3,675.5 L220.0,676.6 L221.7,675.8 L223.4,676.7 L225.1,676.6 L226.8,677.1 L228.5,677.2 L230.2,677.4 L231.9,677.6 L233.6,677.8 L235.3,678.0 L237.0,677.9 L238.7,676.6 L240.4,674.8 L242.1,671.1 L243.8,670.3 L245.5,670.6 L247.2,670.2 L248.9,669.3 L250.6,668.3 L252.3,667.3 L254.0,670.6 L255.7,674.4 L257.4,676.2 L259.1,678.1 L260.8,678.3 L262.5,677.3 L264.2,678.7 L265.9,678.8 L267.6,677.1 L269.3,676.4 L271.0,676.6 L272.7,676.3 L274.4,678.0 L276.1,672.7 L277.8,665.6 L279.5,665.1 L281.2,664.5 L282.9,670.5 L284.6,676.8 L286.3,675.7 L288.0,676.4 L289.7,676.5 L291.4,677.6 L293.1,678.6 L294.8,678.8 L296.5,678.8 L298.2,678.7 L299.9,678.6 L301.6,678.5 L303.3,678.4 L305.0,677.9 L306.7,676.8 L308.4,676.7 L310.1,675.7 L311.8,676.8 L313.5,675.5 L315.2,676.5 L316.9,675.8 L318.6,676.7 L320.3,675.8 L322.0,676.5 L323.7,677.5 L325.4,678.2 L327.1,677.7 L328.8,677.2 L330.5,676.8 L332.2,676.5 L333.9,675.9 L335.6,676.5 L337.3,675.9 L339.0,676.4 L340.7,676.1 L342.4,676.3 L344.1,675.8 L345.8,675.1 L347.5,674.7 L349.2,674.8 L350.9,675.0 L352.6,675.1 L354.3,675.2 L356.0,675.4 L357.7,675.6 L359.4,673.2 L361.1,670.7 L362.8,668.1 L364.5,667.5 L366.2,667.5 L367.9,669.2 L369.6,673.9 L371.3,673.2 L373.0,672.6 L374.7,671.9 L376.4,669.4 L378.1,666.4 L379.8,664.8 L381.5,667.3 L383.2,669.7 L384.9,672.3 L386.6,673.1 L388.3,670.8 L390.0,671.8 L391.7,672.9 L393.4,674.4 L395.1,675.4 L396.8,676.8 L398.5,675.9 L400.2,676.8 L401.9,676.3 L403.6,676.9 L405.3,677.6 L407.0,676.7 L408.7,675.5 L410.4,675.1 L412.1,674.2 L413.8,675.4 L415.5,675.3 L417.2,676.8 L418.9,675.5 L420.6,676.6 L422.3,676.1 L424.0,676.7 L425.7,675.8 L427.4,674.5 L429.1,672.3 L430.8,669.7 L432.5,669.6 L434.2,670.3 L435.9,669.9 L437.6,667.1 L439.3,664.4 L441.0,663.1 L442.7,668.6 L444.4,674.1 L446.1,675.7 L447.8,676.3 L449.5,675.7 L451.2,676.7 L452.9,675.7 L454.6,677.8 L456.3,676.7 L458.0,676.7 L459.7,675.6 L461.4,676.8 L463.1,675.7 L464.8,676.7 L466.5,675.7 L468.2,676.6 L469.9,675.4 L471.6,676.9 L473.3,675.4 L475.0,675.2 L476.7,672.2 L478.4,669.2 L480.1,666.2 L481.8,666.7 L483.5,670.2 L485.2,673.8 L486.9,675.5 L488.6,676.9 L490.3,675.7 L492.0,676.4 L493.7,675.6 L495.4,676.5 L497.1,675.7 L498.8,676.6 L500.5,675.5 L502.2,676.6 L503.9,675.7 L505.6,676.7 L507.3,675.3 L509.0,674.7 L510.7,673.9 L512.4,673.5 L514.1,673.2 L515.8,672.8 L517.5,672.4 L519.2,673.2 L520.9,674.4 L522.6,675.6 L524.3,676.6 L526.0,676.8 L527.7,675.0 L529.4,674.1 L531.1,674.2 L532.8,674.3 L534.5,674.5 L536.2,676.3 L537.9,673.7 L539.6,671.1 L541.3,668.5 L543.0,666.5 L544.7,667.1 L546.4,667.7 L548.1,669.8 L549.8,676.5 L551.5,676.8 L553.2,676.4 L554.9,676.0 L556.6,676.6 L558.3,675.9 L560.0,676.5 L561.7,677.2 L563.4,677.8 L565.1,676.5 L566.8,673.1 L568.5,673.1 L570.2,673.1 L571.9,673.1 L573.6,676.2 L575.3,675.3 L577.0,671.7 L578.7,668.0 L580.4,664.4 L582.1,663.3 L583.8,667.0 L585.5,670.7 L587.2,674.4 L588.9,675.9 L590.6,676.7 L592.3,675.9 L594.0,676.8 L595.7,675.3 L597.4,676.6 L599.1,675.5 L600.8,676.5 L602.5,675.5 L604.2,676.8 L605.9,675.5 L607.6,673.1 L609.3,670.6 L611.0,668.3 L612.7,669.4 L614.4,670.4 L616.1,672.6 L617.8,676.0 L619.5,677.7 L621.2,678.0 L622.9,678.2 L624.6,677.3 L626.3,676.2 L628.0,676.6 L629.7,675.6 L631.4,675.7 L633.1,675.0 L634.8,674.7 L636.5,674.7 L638.2,674.7 L639.9,674.7 L641.6,674.7 L643.3,674.7 L645.0,675.1 L646.7,675.0 L648.4,674.0 L650.1,672.9 L651.8,671.8 L653.5,670.6 L655.2,670.6 L656.9,671.0 L658.6,671.6 L660.3,673.5 L662.0,675.4 L663.7,676.5 L665.4,673.1 L667.1,670.9 L668.8,670.0 L670.5,669.4 L672.2,669.6 L673.9,670.3 L675.6,671.1 L677.3,672.3 L677.3,682 Z" fill="#fa6400" fill-opacity="1.0"/><path d="M436.5,682 L436.5,681.5 L440.2,669.1 L443.4,674.0 L445.5,681.5 L445.5,682 Z" fill="#56a64b" fill-opacity="1.0"/><path d="M99.3,682 L99.3,679.0 L104.0,679.5 L108.0,681.5 L662.0,681.5 L666.0,679.0 L671.0,677.5 L677.8,678.5 L677.8,682 Z" fill="#5794f2" fill-opacity="1.0"/><path d="M99.3,682 L99.3,680.0 L104.0,680.5 L108.0,681.8 L662.0,681.8 L666.0,680.0 L671.0,679.5 L677.8,679.6 L677.8,682 Z" fill="#e0b400" fill-opacity="1.0"/><path d="M99.3,654.0 L100.7,656.9 L103.0,652.9 L105.9,656.3 L109.9,600.9 L113.3,586.6 L115.0,592.3 L119.6,589.4 L124.7,599.1 L129.9,604.9 L143.0,654.0 L149.9,663.7 L159.0,668.3 L163.6,668.9 L171.6,663.1 L175.0,660.3 L179.6,592.9 L183.6,572.3 L187.6,581.4 L192.7,619.1 L196.7,672.9 L200.1,673.4 L213.9,674.6 L219.6,667.1 L225.3,675.1 L236.7,676.3 L240.0,673.9 L243.2,666.4 L246.4,668.0 L252.3,663.8 L255.0,671.8 L259.8,677.1 L262.5,675.5 L265.2,677.7 L267.9,675.0 L272.1,673.9 L274.8,676.6 L277.0,665.4 L282.3,643.4 L287.1,661.1 L289.3,674.5 L293.6,677.1 L304.3,676.6 L310.7,672.3 L321.4,673.4 L324.6,676.6 L334.3,673.9 L342.9,674.5 L350.4,671.3 L357.9,673.9 L362.1,664.3 L366.4,661.6 L369.6,669.6 L373.9,662.1 L378.8,656.8 L381.4,665.4 L385.7,671.3 L388.2,664.8 L392.5,669.1 L396.8,673.9 L402.1,674.5 L405.9,676.1 L412.9,668.6 L420.4,674.5 L426.3,673.9 L431.1,667.5 L434.8,666.4 L439.1,639.6 L440.7,638.0 L443.9,641.8 L446.1,652.5 L449.3,655.2 L453.6,676.6 L457.9,673.9 L463.2,634.3 L465.9,630.0 L470.2,642.3 L475.0,627.9 L479.8,621.4 L483.0,632.1 L485.2,632.1 L487.9,592.5 L492.1,547.0 L494.3,551.8 L497.0,556.6 L501.8,594.6 L508.2,662.7 L512.0,668.6 L517.9,667.0 L525.4,676.1 L528.6,670.2 L532.8,670.3 L536.1,673.1 L542.7,644.8 L547.7,666.4 L550.5,675.3 L557.1,673.6 L564.3,676.4 L567.1,670.3 L571.5,668.6 L574.3,675.3 L578.7,663.7 L581.5,659.2 L586.5,670.9 L589.8,675.3 L596.4,672.0 L600.9,672.5 L606.4,672.5 L610.8,666.4 L615.3,669.2 L618.6,675.8 L623.0,676.4 L629.6,672.5 L639.6,672.0 L646.3,673.6 L654.0,665.3 L658.4,668.1 L663.4,675.3 L666.2,667.0 L671.2,663.7 L677.8,668.1" fill="none" stroke="#a08ad8" stroke-width="0.6" stroke-opacity="0.7" stroke-linejoin="round" stroke-linecap="round"/><path d="M63.8,984.5 L80.0,984.0 L82.0,982.5 L84.0,984.0 L92.0,984.5 L95.0,983.5 L100.0,984.5 L120.0,984.5 L128.0,982.0 L131.3,969.3 L133.0,984.5 L142.0,983.0 L146.0,980.0 L148.0,983.0 L150.0,979.0 L152.0,984.0 L158.0,982.0 L162.0,981.0 L166.0,984.0 L200.0,984.5 L204.0,982.5 L208.0,984.5 L228.0,983.0 L233.0,980.0 L236.0,979.5 L239.0,984.0 L245.0,982.0 L250.0,982.0 L253.0,984.0 L255.0,981.0 L260.0,981.0 L262.0,984.0 L280.0,983.0 L290.0,981.5 L296.0,984.0 L309.0,982.0 L315.0,984.0 L325.0,982.0 L330.0,984.0 L360.0,984.0 L364.0,981.5 L368.0,984.0 L380.0,983.0 L385.0,982.0 L390.0,982.0 L392.7,971.6 L396.1,945.8 L398.8,984.4 L402.0,981.5 L410.0,982.5 L418.0,984.0 L424.0,981.5 L430.0,982.0 L433.0,984.0 L436.4,976.7 L441.4,846.7 L443.8,861.5" fill="none" stroke="#56a64b" stroke-width="1.0" stroke-opacity="1.0" stroke-linejoin="round" stroke-linecap="round"/><path d="M63.8,985.3 L443,985.3" stroke="#e0b400" stroke-width="1.1" stroke-dasharray="2.5 2"/><path d="M63.8,985.6 L88.0,985.6 L92.0,983.5 L96.0,985.6 L104.0,983.5 L108.0,985.6 L449.0,985.6" fill="none" stroke="#5794f2" stroke-width="1.0" stroke-opacity="1.0" stroke-linejoin="round" stroke-linecap="round"/><path d="M522.7,986.3 L522.7,970.4 L524.8,971.4 L542.5,971.4 L547.3,973.0 L550.0,972.3 L552.7,972.5 L554.3,974.1 L555.9,972.3 L559.6,972.3 L561.3,978.9 L562.6,979.5 L563.7,971.2 L567.1,972.3 L568.8,976.3 L570.4,975.2 L573.6,978.4 L577.9,981.1 L588.0,981.3 L589.6,976.3 L591.3,975.7 L593.9,973.3 L599.3,972.3 L604.6,981.1 L607.3,981.1 L610.0,968.8 L612.4,966.3 L615.9,974.1 L617.0,973.0 L618.6,956.4 L620.2,956.2 L621.6,951.3 L623.4,953.8 L625.5,952.1 L627.1,939.8 L629.3,937.1 L633.6,936.1 L634.9,935.5 L637.9,944.1 L640.0,957.0 L641.6,957.5 L643.2,972.0 L647.0,972.5 L649.6,981.3 L652.9,950.5 L655.5,952.7 L657.7,957.0 L659.3,956.4 L660.0,957.5 L661.8,970.0 L668.0,974.5 L673.4,966.8 L677.9,963.8 L681.1,970.9 L685.0,973.6 L689.5,970.4 L693.0,971.8 L696.6,963.8 L699.6,979.8 L702.9,971.8 L706.4,973.6 L709.1,981.6 L712.1,967.9 L720.7,973.2 L726.1,969.6 L729.6,973.6 L731.4,978.0 L738.6,969.1 L741.8,962.0 L743.9,958.4 L746.6,940.5 L747.5,970.0 L752.9,970.9 L755.5,972.7 L759.1,970.9 L762.7,972.3 L768.0,971.8 L771.6,962.5 L774.3,964.6 L776.1,973.6 L781.4,970.9 L786.8,978.0 L791.3,973.6 L793.9,976.3 L801.1,972.7 L806.4,971.8 L810.5,954.3 L812.7,972.1 L820.7,971.8 L825.2,964.6 L827.0,970.9 L838.6,972.1 L851.1,970.9 L856.4,972.1 L861.8,973.6 L868.0,966.8 L871.6,970.4 L877.9,967.9 L882.3,972.7 L887.7,971.4 L893.0,975.4 L897.5,967.3 L899.6,956.6 L902.2,847.4 L902.2,986.3 Z" fill="#56a64b" fill-opacity="0.035"/><path d="M522.8,984.2 L633.0,984.2 L635.0,981.3 L638.0,984.2 L652.0,984.2 L655.0,982.0 L660.0,984.2 L903.0,984.2" fill="none" stroke="#e0b400" stroke-width="1.2" stroke-opacity="1.0" stroke-linejoin="round" stroke-linecap="round"/><path d="M522.8,983.4 L610.0,983.4 L613.0,982.5 L616.0,984.0 L620.7,981.3 L631.4,979.5 L634.9,976.5 L641.0,983.0 L649.6,984.0 L652.9,979.1 L659.3,980.5 L661.0,983.4 L671.5,983.4 L673.0,977.5 L677.0,977.5 L679.0,983.4 L745.0,983.4 L746.6,979.8 L749.0,983.4 L809.0,983.4 L811.0,979.3 L814.0,983.4 L823.0,983.4 L825.0,981.5 L827.0,983.4 L855.0,983.4 L857.5,980.2 L861.0,983.4 L903.0,983.0" fill="none" stroke="#5794f2" stroke-width="1.2" stroke-opacity="1.0" stroke-linejoin="round" stroke-linecap="round"/><path d="M522.7,970.4 L524.8,971.4 L542.5,971.4 L547.3,973.0 L550.0,972.3 L552.7,972.5 L554.3,974.1 L555.9,972.3 L559.6,972.3 L561.3,978.9 L562.6,979.5 L563.7,971.2 L567.1,972.3 L568.8,976.3 L570.4,975.2 L573.6,978.4 L577.9,981.1 L588.0,981.3 L589.6,976.3 L591.3,975.7 L593.9,973.3 L599.3,972.3 L604.6,981.1 L607.3,981.1 L610.0,968.8 L612.4,966.3 L615.9,974.1 L617.0,973.0 L618.6,956.4 L620.2,956.2 L621.6,951.3 L623.4,953.8 L625.5,952.1 L627.1,939.8 L629.3,937.1 L633.6,936.1 L634.9,935.5 L637.9,944.1 L640.0,957.0 L641.6,957.5 L643.2,972.0 L647.0,972.5 L649.6,981.3 L652.9,950.5 L655.5,952.7 L657.7,957.0 L659.3,956.4 L660.0,957.5 L661.8,970.0 L668.0,974.5 L673.4,966.8 L677.9,963.8 L681.1,970.9 L685.0,973.6 L689.5,970.4 L693.0,971.8 L696.6,963.8 L699.6,979.8 L702.9,971.8 L706.4,973.6 L709.1,981.6 L712.1,967.9 L720.7,973.2 L726.1,969.6 L729.6,973.6 L731.4,978.0 L738.6,969.1 L741.8,962.0 L743.9,958.4 L746.6,940.5 L747.5,970.0 L752.9,970.9 L755.5,972.7 L759.1,970.9 L762.7,972.3 L768.0,971.8 L771.6,962.5 L774.3,964.6 L776.1,973.6 L781.4,970.9 L786.8,978.0 L791.3,973.6 L793.9,976.3 L801.1,972.7 L806.4,971.8 L810.5,954.3 L812.7,972.1 L820.7,971.8 L825.2,964.6 L827.0,970.9 L838.6,972.1 L851.1,970.9 L856.4,972.1 L861.8,973.6 L868.0,966.8 L871.6,970.4 L877.9,967.9 L882.3,972.7 L887.7,971.4 L893.0,975.4 L897.5,967.3 L899.6,956.6 L902.2,847.4" fill="none" stroke="#56a64b" stroke-width="1.0" stroke-opacity="1.0" stroke-linejoin="round" stroke-linecap="round"/><path d="M980.7,985.7 L1170.0,985.7 L1173.7,983.3 L1177.0,985.7 L1199.0,985.7 L1200.4,960.0 L1205.2,985.7 L1280.0,985.7 L1282.0,983.5 L1285.0,985.7 L1304.0,985.7 L1307.0,982.0 L1310.1,851.0 L1312.5,985.7 L1314.0,984.0 L1316.0,985.7 L1357.8,985.7" fill="none" stroke="#56a64b" stroke-width="1.0" stroke-opacity="1.0" stroke-linejoin="round" stroke-linecap="round"/><path d="M980.7,985.3 L1357.8,985.3" stroke="#e0b400" stroke-width="1.2" stroke-dasharray="3 1"/><path d="M980.7,986.2 L1357.8,986.2" stroke="#5794f2" stroke-width="0.9" stroke-dasharray="2 2"/><path d="M63.8,1290.3 L67,1290.3" stroke="#5794f2" stroke-width="1"/><path d="M63.8,1289.5 L67,1289.5" stroke="#e0b400" stroke-width="1.3" stroke-dasharray="2 1"/><path d="M64.8,1288.9 L67,1288.9" stroke="#56a64b" stroke-width="1" stroke-dasharray="1.5 1.5"/><path d="M80.6,1290.3 L124,1290.3" stroke="#5794f2" stroke-width="1"/><path d="M80.6,1289.5 L124,1289.5" stroke="#e0b400" stroke-width="1.3" stroke-dasharray="2 1"/><path d="M81.6,1288.9 L124,1288.9" stroke="#56a64b" stroke-width="1" stroke-dasharray="1.5 1.5"/><path d="M128,1290.3 L133,1290.3" stroke="#5794f2" stroke-width="1"/><path d="M128,1289.5 L133,1289.5" stroke="#e0b400" stroke-width="1.3" stroke-dasharray="2 1"/><path d="M129,1288.9 L133,1288.9" stroke="#56a64b" stroke-width="1" stroke-dasharray="1.5 1.5"/><path d="M138,1290.3 L148,1290.3" stroke="#5794f2" stroke-width="1"/><path d="M138,1289.5 L148,1289.5" stroke="#e0b400" stroke-width="1.3" stroke-dasharray="2 1"/><path d="M139,1288.9 L148,1288.9" stroke="#56a64b" stroke-width="1" stroke-dasharray="1.5 1.5"/><path d="M152,1290.3 L154,1290.3" stroke="#5794f2" stroke-width="1"/><path d="M152,1289.5 L154,1289.5" stroke="#e0b400" stroke-width="1.3" stroke-dasharray="2 1"/><path d="M153,1288.9 L154,1288.9" stroke="#56a64b" stroke-width="1" stroke-dasharray="1.5 1.5"/><path d="M158,1290.3 L171,1290.3" stroke="#5794f2" stroke-width="1"/><path d="M158,1289.5 L171,1289.5" stroke="#e0b400" stroke-width="1.3" stroke-dasharray="2 1"/><path d="M159,1288.9 L171,1288.9" stroke="#56a64b" stroke-width="1" stroke-dasharray="1.5 1.5"/><path d="M175,1290.3 L238,1290.3" stroke="#5794f2" stroke-width="1"/><path d="M175,1289.5 L238,1289.5" stroke="#e0b400" stroke-width="1.3" stroke-dasharray="2 1"/><path d="M176,1288.9 L238,1288.9" stroke="#56a64b" stroke-width="1" stroke-dasharray="1.5 1.5"/><path d="M241,1290.3 L273,1290.3" stroke="#5794f2" stroke-width="1"/><path d="M241,1289.5 L273,1289.5" stroke="#e0b400" stroke-width="1.3" stroke-dasharray="2 1"/><path d="M242,1288.9 L273,1288.9" stroke="#56a64b" stroke-width="1" stroke-dasharray="1.5 1.5"/><path d="M279,1290.3 L329,1290.3" stroke="#5794f2" stroke-width="1"/><path d="M279,1289.5 L329,1289.5" stroke="#e0b400" stroke-width="1.3" stroke-dasharray="2 1"/><path d="M280,1288.9 L329,1288.9" stroke="#56a64b" stroke-width="1" stroke-dasharray="1.5 1.5"/><path d="M341,1290.3 L350,1290.3" stroke="#5794f2" stroke-width="1"/><path d="M341,1289.5 L350,1289.5" stroke="#e0b400" stroke-width="1.3" stroke-dasharray="2 1"/><path d="M342,1288.9 L350,1288.9" stroke="#56a64b" stroke-width="1" stroke-dasharray="1.5 1.5"/><path d="M355,1290.3 L361,1290.3" stroke="#5794f2" stroke-width="1"/><path d="M355,1289.5 L361,1289.5" stroke="#e0b400" stroke-width="1.3" stroke-dasharray="2 1"/><path d="M356,1288.9 L361,1288.9" stroke="#56a64b" stroke-width="1" stroke-dasharray="1.5 1.5"/><path d="M374,1290.3 L411,1290.3" stroke="#5794f2" stroke-width="1"/><path d="M374,1289.5 L411,1289.5" stroke="#e0b400" stroke-width="1.3" stroke-dasharray="2 1"/><path d="M375,1288.9 L411,1288.9" stroke="#56a64b" stroke-width="1" stroke-dasharray="1.5 1.5"/><path d="M419,1290.3 L449,1290.3" stroke="#5794f2" stroke-width="1"/><path d="M419,1289.5 L449,1289.5" stroke="#e0b400" stroke-width="1.3" stroke-dasharray="2 1"/><path d="M420,1288.9 L449,1288.9" stroke="#56a64b" stroke-width="1" stroke-dasharray="1.5 1.5"/><path d="M250.0,1289.4 L254.1,1269.2 L256.0,1277.0 L258.5,1280.0 L262.0,1289.4" fill="none" stroke="#56a64b" stroke-width="1.0" stroke-opacity="1.0" stroke-linejoin="round" stroke-linecap="round"/><path d="M355.0,1289.4 L359.0,1280.0 L362.0,1279.0 L365.0,1277.0 L367.0,1289.4" fill="none" stroke="#56a64b" stroke-width="1.0" stroke-opacity="1.0" stroke-linejoin="round" stroke-linecap="round"/><path d="M388.0,1289.4 L391.1,1150.1 L394.0,1289.4" fill="none" stroke="#56a64b" stroke-width="1.0" stroke-opacity="1.0" stroke-linejoin="round" stroke-linecap="round"/><path d="M388.0,1289.4 L391.1,1253.8 L394.0,1289.4" fill="none" stroke="#5794f2" stroke-width="1.1" stroke-opacity="1.0" stroke-linejoin="round" stroke-linecap="round"/><path d="M436.0,1289.4 L438.0,1286.0 L440.0,1289.4" fill="none" stroke="#56a64b" stroke-width="1.0" stroke-opacity="1.0" stroke-linejoin="round" stroke-linecap="round"/><path d="M548.9,1290.4 L548.9,1290.4 L551.5,1159.0 L554.8,1159.0 L556.1,1162.2 L558.1,1275.6 L560.4,1275.6 L561.4,1226.3 L563.7,1228.0 L566.0,1157.3 L569.2,1157.3 L570.6,1290.4 L581.7,1288.8 L585.0,1229.6 L590.0,1234.5 L593.2,1237.8 L594.2,1288.8 L601.4,1288.8 L608.0,1277.2 L612.0,1282.2 L613.0,1290.4 L621.2,1290.4 L626.1,1282.2 L634.3,1287.1 L639.2,1288.8 L640.9,1281.5 L642.5,1290.4 L663.9,1290.4 L667.2,1287.1 L675.4,1277.2 L678.0,1288.8 L683.0,1157.3 L686.2,1157.3 L687.5,1290.4 L695.1,1288.8 L698.4,1157.3 L704.0,1157.3 L705.3,1290.4 L707.3,1170.4 L709.9,1158.9 L711.5,1290.4 L718.1,1290.4 L720.4,1282.2 L722.4,1290.4 L729.6,1287.1 L734.5,1281.5 L736.2,1290.4 L773.0,1289.4 L778.9,1272.3 L782.2,1226.3 L785.5,1226.3 L787.1,1290.4 L790.4,1158.9 L796.0,1161.2 L797.6,1290.4 L805.9,1290.4 L807.8,1178.7 L809.1,1290.4 L818.3,1287.1 L823.3,1224.7 L826.6,1226.3 L830.8,1290.4 L833.1,1157.3 L836.4,1157.3 L837.4,1290.4 L840.7,1216.5 L844.6,1198.4 L846.2,1290.4 L851.2,1287.1 L862.7,1287.1 L870.9,1290.4 L874.2,1226.3 L882.4,1234.5 L884.7,1290.4 L886.7,1167.2 L890.0,1169.8 L891.3,1290.4 L897.2,1285.5 L902.1,1280.5 L902.1,1290.4 Z" fill="#56a64b" fill-opacity="0.03"/><path d="M548.9,1290.6 L821.0,1290.6 L824.3,1274.0 L827.0,1290.6 L903.0,1290.6" fill="none" stroke="#e0b400" stroke-width="1.2" stroke-opacity="1.0" stroke-linejoin="round" stroke-linecap="round"/><path d="M548.9,1290.4 L553.8,1246.0 L557.1,1274.0 L560.4,1280.5 L562.0,1277.2 L568.6,1285.5 L570.2,1290.4 L680.3,1290.4 L686.9,1254.2 L690.2,1290.4 L698.4,1257.5 L704.0,1290.4 L709.9,1259.2 L711.5,1290.4 L778.9,1290.4 L783.8,1275.6 L787.1,1290.4 L792.0,1272.3 L797.0,1290.4 L821.7,1290.4 L825.0,1265.7 L830.0,1290.4 L834.1,1246.0 L836.4,1236.2 L838.0,1290.4 L874.2,1290.4 L877.5,1279.0 L882.4,1285.5 L887.3,1285.5 L890.6,1290.4 L903.0,1290.4" fill="none" stroke="#5794f2" stroke-width="1.1" stroke-opacity="1.0" stroke-linejoin="round" stroke-linecap="round"/><path d="M548.9,1290.4 L551.5,1159.0 L554.8,1159.0 L556.1,1162.2 L558.1,1275.6 L560.4,1275.6 L561.4,1226.3 L563.7,1228.0 L566.0,1157.3 L569.2,1157.3 L570.6,1290.4 L581.7,1288.8 L585.0,1229.6 L590.0,1234.5 L593.2,1237.8 L594.2,1288.8 L601.4,1288.8 L608.0,1277.2 L612.0,1282.2 L613.0,1290.4 L621.2,1290.4 L626.1,1282.2 L634.3,1287.1 L639.2,1288.8 L640.9,1281.5 L642.5,1290.4 L663.9,1290.4 L667.2,1287.1 L675.4,1277.2 L678.0,1288.8 L683.0,1157.3 L686.2,1157.3 L687.5,1290.4 L695.1,1288.8 L698.4,1157.3 L704.0,1157.3 L705.3,1290.4 L707.3,1170.4 L709.9,1158.9 L711.5,1290.4 L718.1,1290.4 L720.4,1282.2 L722.4,1290.4 L729.6,1287.1 L734.5,1281.5 L736.2,1290.4 L773.0,1289.4 L778.9,1272.3 L782.2,1226.3 L785.5,1226.3 L787.1,1290.4 L790.4,1158.9 L796.0,1161.2 L797.6,1290.4 L805.9,1290.4 L807.8,1178.7 L809.1,1290.4 L818.3,1287.1 L823.3,1224.7 L826.6,1226.3 L830.8,1290.4 L833.1,1157.3 L836.4,1157.3 L837.4,1290.4 L840.7,1216.5 L844.6,1198.4 L846.2,1290.4 L851.2,1287.1 L862.7,1287.1 L870.9,1290.4 L874.2,1226.3 L882.4,1234.5 L884.7,1290.4 L886.7,1167.2 L890.0,1169.8 L891.3,1290.4 L897.2,1285.5 L902.1,1280.5" fill="none" stroke="#56a64b" stroke-width="1.0" stroke-opacity="1.0" stroke-linejoin="round" stroke-linecap="round"/><path d="M995.9,1243.4 L999.9,1243.4" fill="none" stroke="#56a64b" stroke-width="1.0" stroke-opacity="1.0" stroke-linejoin="round" stroke-linecap="round"/><path d="M995.9,1264.3 L999.9,1264.3" fill="none" stroke="#e0b400" stroke-width="1.0" stroke-opacity="1.0" stroke-linejoin="round" stroke-linecap="round"/><path d="M995.9,1272.1 L999.9,1272.1" fill="none" stroke="#5794f2" stroke-width="1.0" stroke-opacity="1.0" stroke-linejoin="round" stroke-linecap="round"/><path d="M1070.9,1243.4 L1074.9,1243.4" fill="none" stroke="#56a64b" stroke-width="1.0" stroke-opacity="1.0" stroke-linejoin="round" stroke-linecap="round"/><path d="M1070.9,1264.3 L1074.9,1264.3" fill="none" stroke="#e0b400" stroke-width="1.0" stroke-opacity="1.0" stroke-linejoin="round" stroke-linecap="round"/><path d="M1070.9,1274.3 L1074.9,1274.3" fill="none" stroke="#5794f2" stroke-width="1.0" stroke-opacity="1.0" stroke-linejoin="round" stroke-linecap="round"/><path d="M1087.1,1243.4 L1096.5,1243.4" fill="none" stroke="#56a64b" stroke-width="1.0" stroke-opacity="1.0" stroke-linejoin="round" stroke-linecap="round"/><path d="M1087.1,1264.3 L1096.5,1264.3" fill="none" stroke="#e0b400" stroke-width="1.0" stroke-opacity="1.0" stroke-linejoin="round" stroke-linecap="round"/><path d="M1087.1,1271.9 L1096.5,1271.9" fill="none" stroke="#5794f2" stroke-width="1.0" stroke-opacity="1.0" stroke-linejoin="round" stroke-linecap="round"/><path d="M1155.0,1243.4 L1159.7,1243.4" fill="none" stroke="#56a64b" stroke-width="1.0" stroke-opacity="1.0" stroke-linejoin="round" stroke-linecap="round"/><path d="M1155.0,1264.3 L1159.7,1264.3" fill="none" stroke="#e0b400" stroke-width="1.0" stroke-opacity="1.0" stroke-linejoin="round" stroke-linecap="round"/><path d="M1155.0,1273.8 L1159.7,1273.8" fill="none" stroke="#5794f2" stroke-width="1.0" stroke-opacity="1.0" stroke-linejoin="round" stroke-linecap="round"/><path d="M1167.3,1243.4 L1170.8,1243.4" fill="none" stroke="#56a64b" stroke-width="1.0" stroke-opacity="1.0" stroke-linejoin="round" stroke-linecap="round"/><path d="M1167.3,1264.3 L1170.8,1264.3" fill="none" stroke="#e0b400" stroke-width="1.0" stroke-opacity="1.0" stroke-linejoin="round" stroke-linecap="round"/><path d="M1167.3,1272.1 L1170.8,1272.1" fill="none" stroke="#5794f2" stroke-width="1.0" stroke-opacity="1.0" stroke-linejoin="round" stroke-linecap="round"/><path d="M1194.6,1243.4 L1198.6,1243.4" fill="none" stroke="#56a64b" stroke-width="1.0" stroke-opacity="1.0" stroke-linejoin="round" stroke-linecap="round"/><path d="M1194.6,1264.3 L1198.6,1264.3" fill="none" stroke="#e0b400" stroke-width="1.0" stroke-opacity="1.0" stroke-linejoin="round" stroke-linecap="round"/><path d="M1194.6,1273.1 L1198.6,1273.1" fill="none" stroke="#5794f2" stroke-width="1.0" stroke-opacity="1.0" stroke-linejoin="round" stroke-linecap="round"/><path d="M1263.0,1243.4 L1267.0,1243.4" fill="none" stroke="#56a64b" stroke-width="1.0" stroke-opacity="1.0" stroke-linejoin="round" stroke-linecap="round"/><path d="M1263.0,1264.3 L1267.0,1264.3" fill="none" stroke="#e0b400" stroke-width="1.0" stroke-opacity="1.0" stroke-linejoin="round" stroke-linecap="round"/><path d="M1263.0,1271.4 L1267.0,1271.4" fill="none" stroke="#5794f2" stroke-width="1.0" stroke-opacity="1.0" stroke-linejoin="round" stroke-linecap="round"/><path d="M1270.5,1243.4 L1274.7,1243.4" fill="none" stroke="#56a64b" stroke-width="1.0" stroke-opacity="1.0" stroke-linejoin="round" stroke-linecap="round"/><path d="M1270.5,1264.3 L1274.7,1264.3" fill="none" stroke="#e0b400" stroke-width="1.0" stroke-opacity="1.0" stroke-linejoin="round" stroke-linecap="round"/><path d="M1270.5,1271.4 L1274.7,1271.4" fill="none" stroke="#5794f2" stroke-width="1.0" stroke-opacity="1.0" stroke-linejoin="round" stroke-linecap="round"/><path d="M1285.8,1243.4 L1289.8,1243.4" fill="none" stroke="#56a64b" stroke-width="1.0" stroke-opacity="1.0" stroke-linejoin="round" stroke-linecap="round"/><path d="M1285.8,1264.3 L1289.8,1264.3" fill="none" stroke="#e0b400" stroke-width="1.0" stroke-opacity="1.0" stroke-linejoin="round" stroke-linecap="round"/><path d="M1285.8,1274.3 L1289.8,1274.3" fill="none" stroke="#5794f2" stroke-width="1.0" stroke-opacity="1.0" stroke-linejoin="round" stroke-linecap="round"/><path d="M1295.3,1243.4 L1299.3,1243.4" fill="none" stroke="#56a64b" stroke-width="1.0" stroke-opacity="1.0" stroke-linejoin="round" stroke-linecap="round"/><path d="M1295.3,1264.3 L1299.3,1264.3" fill="none" stroke="#e0b400" stroke-width="1.0" stroke-opacity="1.0" stroke-linejoin="round" stroke-linecap="round"/><path d="M1295.3,1269.5 L1299.3,1269.5" fill="none" stroke="#5794f2" stroke-width="1.0" stroke-opacity="1.0" stroke-linejoin="round" stroke-linecap="round"/><path d="M1179.3,1150.0 L1181.4,1154.8 L1183.3,1156.4 L1184.5,1177.1" fill="none" stroke="#56a64b" stroke-width="1.0" stroke-opacity="1.0" stroke-linejoin="round" stroke-linecap="round"/><path d="M1179.3,1200.2 L1180.9,1258.5 L1182.1,1260.8 L1184.5,1263.9" fill="none" stroke="#e0b400" stroke-width="1.0" stroke-opacity="1.0" stroke-linejoin="round" stroke-linecap="round"/><path d="M1179.3,1223.1 L1181.4,1264.4 L1182.8,1265.5 L1184.5,1273.3" fill="none" stroke="#5794f2" stroke-width="1.0" stroke-opacity="1.0" stroke-linejoin="round" stroke-linecap="round"/><path d="M1263.4,1184.2 L1266.3,1184.2 L1266.5,1193.6" fill="none" stroke="#56a64b" stroke-width="1.0" stroke-opacity="1.0" stroke-linejoin="round" stroke-linecap="round"/><path d="M1170.3,1233.7 L1170.3,1243.4" fill="none" stroke="#56a64b" stroke-width="1.0" stroke-opacity="1.0" stroke-linejoin="round" stroke-linecap="round"/><path d="M1195.1,1237.3 L1195.1,1243.4" fill="none" stroke="#56a64b" stroke-width="1.0" stroke-opacity="1.0" stroke-linejoin="round" stroke-linecap="round"/><path d="M1271.7,1232.5 L1271.7,1243.4" fill="none" stroke="#56a64b" stroke-width="1.0" stroke-opacity="1.0" stroke-linejoin="round" stroke-linecap="round"/><path d="M1170.3,1258.5 L1170.3,1264.3" fill="none" stroke="#e0b400" stroke-width="1.0" stroke-opacity="1.0" stroke-linejoin="round" stroke-linecap="round"/><path d="M1170.3,1266.7 L1170.3,1272.1" fill="none" stroke="#5794f2" stroke-width="1.0" stroke-opacity="1.0" stroke-linejoin="round" stroke-linecap="round"/><rect x="753.75" y="354.6" width="613.25" height="1.1" fill="#6b589e"/><rect x="753.75" y="681.8" width="613.25" height="1.2" fill="#a352cc"/><rect x="1194.2" y="680.6" width="8.4" height="1.3" rx="0.6" fill="#e0ad00"/></svg>
</div></body></html>
